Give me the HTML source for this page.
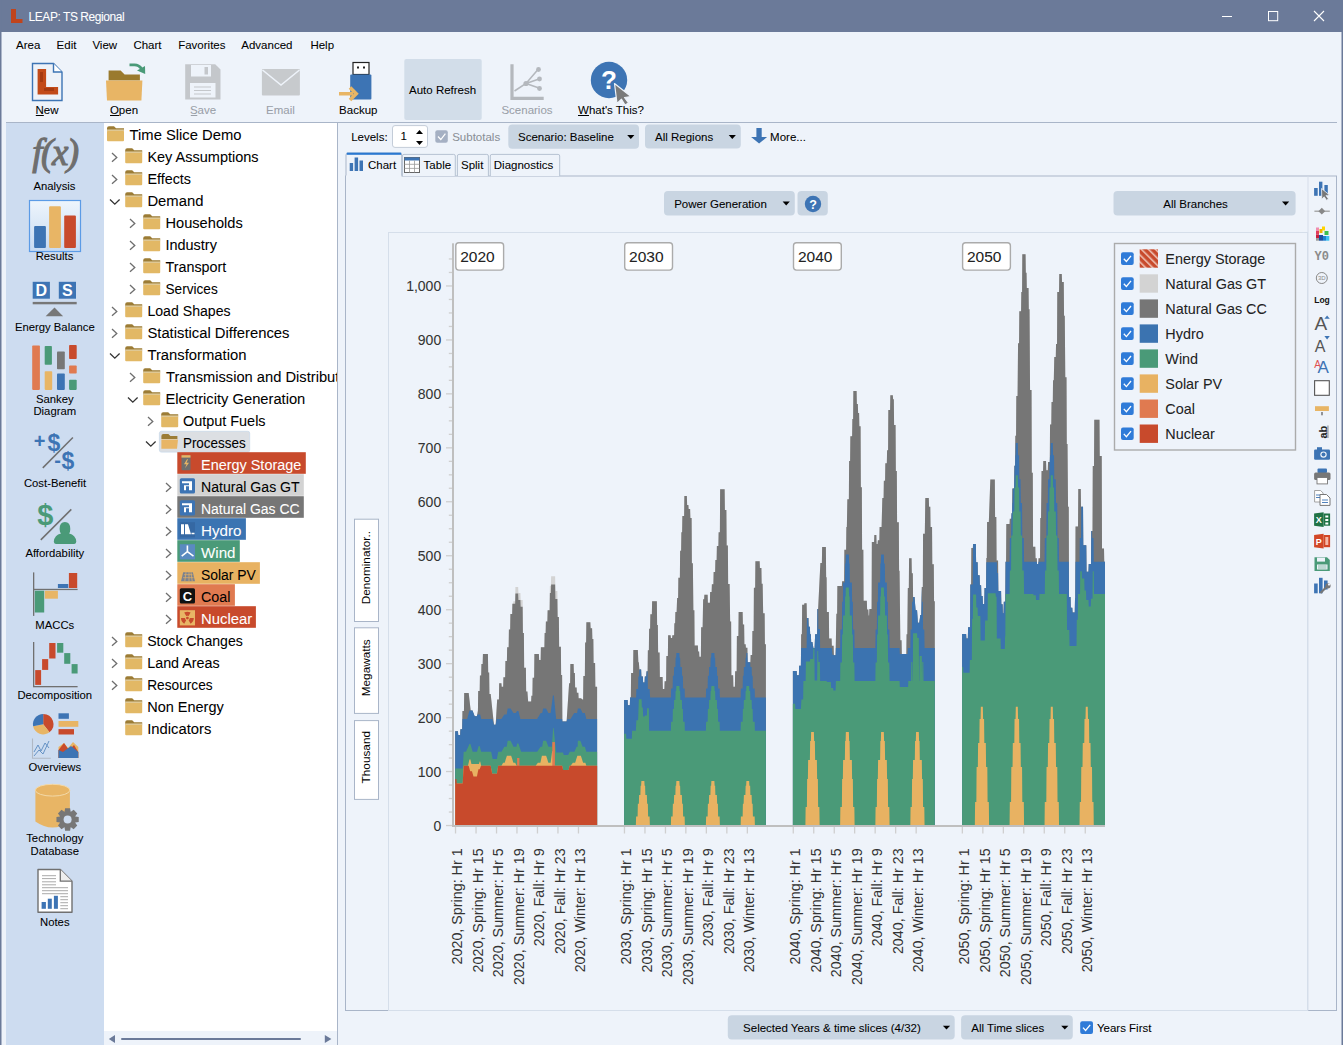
<!DOCTYPE html>
<html><head><meta charset="utf-8"><style>
html,body{margin:0;padding:0;width:1343px;height:1045px;overflow:hidden;background:#eef3fa}
svg{display:block;font-family:"Liberation Sans", sans-serif}
</style></head><body>
<svg width="1343" height="1045" viewBox="0 0 1343 1045">
<rect x="0" y="0" width="1343" height="1045" fill="#eef3fa"/>
<rect x="0" y="0" width="1343" height="32" fill="#6b7a99"/>
<rect x="0" y="0" width="1.5" height="1045" fill="#6b7a99"/>
<rect x="1341.5" y="0" width="1.5" height="1045" fill="#6b7a99"/>
<path d="M11 9 h5 v10 h6.5 v4 h-11.5 z" fill="#c0441c"/>
<text x="28.6" y="21.2" font-size="12" fill="#fff" stroke="#fff" stroke-width="0.06" text-anchor="start" letter-spacing="-0.45">LEAP: TS Regional</text>
<rect x="1222" y="16" width="10" height="1" fill="#fff"/>
<rect x="1268.5" y="11.5" width="9.2" height="9.2" fill="none" stroke="#fff" stroke-width="1"/>
<path d="M1314 11 L1324 21 M1324 11 L1314 21" stroke="#fff" stroke-width="1.1"/>
<text x="16.1" y="48.6" font-size="11.5" fill="#000" stroke="#000" stroke-width="0.06" text-anchor="start" >Area</text>
<text x="56.6" y="48.6" font-size="11.5" fill="#000" stroke="#000" stroke-width="0.06" text-anchor="start" >Edit</text>
<text x="92.4" y="48.6" font-size="11.5" fill="#000" stroke="#000" stroke-width="0.06" text-anchor="start" >View</text>
<text x="133.4" y="48.6" font-size="11.5" fill="#000" stroke="#000" stroke-width="0.06" text-anchor="start" >Chart</text>
<text x="178.2" y="48.6" font-size="11.5" fill="#000" stroke="#000" stroke-width="0.06" text-anchor="start" >Favorites</text>
<text x="241.3" y="48.6" font-size="11.5" fill="#000" stroke="#000" stroke-width="0.06" text-anchor="start" >Advanced</text>
<text x="310.4" y="48.6" font-size="11.5" fill="#000" stroke="#000" stroke-width="0.06" text-anchor="start" >Help</text>
<rect x="6" y="122" width="1331" height="1" fill="#a9b5c8"/>
<path d="M32.5 63.5 h21 l8.5 8.5 v28.5 h-29.5 z" fill="#eef2f8" stroke="#3d74b4" stroke-width="1.4"/>
<path d="M53.5 63.5 v8.5 h8.5" fill="#fff" stroke="#3d74b4" stroke-width="1.4"/>
<path d="M37.6 69 h8.5 v18 h12 v7.5 h-20.5 z" fill="#c24a18"/>
<path d="M40 72 h3 v10 h-3z M44 88 h10 v3 h-10z" fill="#8a2a08" opacity="0.5"/>
<text x="47" y="113.5" font-size="11.5" fill="#000" stroke="#000" stroke-width="0.06" text-anchor="middle" >New</text>
<rect x="35.8" y="115" width="8" height="1" fill="#000"/>
<path d="M108.6 70.6 h12 l4 4 h15.3 v6 h-31.3 z" fill="#9a7a2e"/>
<path d="M106 80.6 h36.4 l-1 19.8 h-34.4 z" fill="#e8b565"/>
<path d="M129.5 64.8 h5 q4.5 0 7 4" stroke="#4a9a78" stroke-width="2.8" fill="none"/>
<path d="M137 70.5 l8 -4.5 l0.2 8 z" fill="#4a9a78"/>
<text x="124" y="113.5" font-size="11.5" fill="#000" stroke="#000" stroke-width="0.06" text-anchor="middle" >Open</text>
<rect x="110" y="115" width="9" height="1" fill="#000"/>
<path d="M185.2 64.2 h30 l5.3 5.3 v29.9 h-35.3 z" fill="#c4c7cb"/>
<rect x="191" y="65" width="20" height="11.5" fill="#eef3fa"/>
<rect x="204.5" y="67" width="3.5" height="7.5" fill="#c4c7cb"/>
<rect x="190" y="83" width="25.5" height="14.5" fill="#eef3fa"/>
<path d="M194 87h17M194 90.5h17M194 94h17" stroke="#c4c7cb" stroke-width="1"/>
<text x="203" y="113.5" font-size="11.5" fill="#9aa0a8" stroke="#9aa0a8" stroke-width="0.06" text-anchor="middle" >Save</text>
<rect x="190.8" y="115" width="6.5" height="1" fill="#9aa0a8"/>
<rect x="261.9" y="69.1" width="38" height="26.4" rx="1" fill="#c7cacd"/>
<path d="M262.5 70 L281 85 L299.5 70" stroke="#eef3fa" stroke-width="1.6" fill="none"/>
<text x="280.5" y="113.5" font-size="11.5" fill="#9aa0a8" stroke="#9aa0a8" stroke-width="0.06" text-anchor="middle" >Email</text>
<rect x="353" y="62.5" width="16" height="12" fill="#fff" stroke="#222" stroke-width="1.2"/>
<rect x="357" y="66.5" width="2" height="2" fill="#222"/><rect x="363" y="66.5" width="2" height="2" fill="#222"/>
<rect x="350.2" y="74.4" width="21.2" height="25" rx="1" fill="#3d74b4"/>
<path d="M339 93.7 h14 M350 87.5 l6.2 6.2 l-6.2 6.2" stroke="#e8b565" stroke-width="3.6" fill="none"/>
<text x="358.3" y="113.5" font-size="11.5" fill="#000" stroke="#000" stroke-width="0.06" text-anchor="middle" >Backup</text>
<rect x="404.3" y="58.9" width="77.4" height="61" rx="2" fill="#d2dde9"/>
<text x="442.6" y="93.7" font-size="11.5" fill="#000" stroke="#000" stroke-width="0.06" text-anchor="middle" >Auto Refresh</text>
<path d="M512 64.3 v34 h31.7" stroke="#b4b8bd" stroke-width="3.2" fill="none"/>
<path d="M514.5 91 L526 83.5 L538 69.5 M526 83.5 L539 79 M526 83.5 L539 88" stroke="#b4b8bd" stroke-width="1.6" fill="none"/>
<circle cx="526" cy="83.5" r="2.6" fill="#b4b8bd"/><circle cx="538.5" cy="69.5" r="2.4" fill="#b4b8bd"/><circle cx="539.5" cy="79" r="2.4" fill="#b4b8bd"/><circle cx="539.5" cy="88.5" r="2.4" fill="#b4b8bd"/>
<text x="527" y="113.5" font-size="11.5" fill="#9aa0a8" stroke="#9aa0a8" stroke-width="0.06" text-anchor="middle" >Scenarios</text>
<circle cx="609" cy="80" r="18.2" fill="#3d74b4"/>
<text x="609" y="89" font-size="26" font-weight="bold" fill="#fff" text-anchor="middle">?</text>
<path d="M614.5 83.5 L631 96.5 L624.5 97.5 L628.5 103 L625 105 L621.5 99.2 L617 103.5 z" fill="#7a7a7a" stroke="#eef3fa" stroke-width="1.2" stroke-linejoin="round"/>
<text x="611" y="113.5" font-size="11.5" fill="#000" stroke="#000" stroke-width="0.06" text-anchor="middle" >What&#39;s This?</text>
<rect x="578" y="115" width="11" height="1" fill="#000"/>
<rect x="6" y="123" width="98" height="922" fill="#cddcf0"/>
<text x="55" y="165" font-family="Liberation Serif" font-style="italic" font-size="37" fill="#6e6e6e" stroke="#6e6e6e" stroke-width="1.1" text-anchor="middle" letter-spacing="-1.5">f(x)</text>
<text x="54.5" y="189.5" font-size="11.3" fill="#000" stroke="#000" stroke-width="0.06" text-anchor="middle" >Analysis</text>
<defs><linearGradient id="rg" x1="0" y1="0" x2="0" y2="1"><stop offset="0" stop-color="#eef5fc"/><stop offset="1" stop-color="#c6daf2"/></linearGradient></defs>
<rect x="29.5" y="200.5" width="51" height="51" fill="url(#rg)" stroke="#5b9be6" stroke-width="1.2"/>
<rect x="34.1" y="226.1" width="11.8" height="21.8" rx="1" fill="#3d74b4"/>
<rect x="49.1" y="206.3" width="11.8" height="41.6" rx="1" fill="#e8b565"/>
<rect x="64.2" y="215.4" width="11.7" height="32.5" rx="1" fill="#c84a2c"/>
<text x="54.5" y="260.3" font-size="11.3" fill="#000" stroke="#000" stroke-width="0.06" text-anchor="middle" >Results</text>
<rect x="32.7" y="281.8" width="17.2" height="16.9" fill="#3d74b4"/>
<rect x="58.8" y="281.8" width="17.2" height="16.9" fill="#3d74b4"/>
<text x="41.3" y="296" font-size="16" font-weight="bold" fill="#fff" text-anchor="middle">D</text>
<text x="67.4" y="296" font-size="16" font-weight="bold" fill="#fff" text-anchor="middle">S</text>
<rect x="32.7" y="301.9" width="44" height="2.4" fill="#777"/>
<path d="M54.5 307.6 L63.1 316.2 L45.6 316.2 z" fill="#777"/>
<text x="54.8" y="331.4" font-size="11.3" fill="#000" stroke="#000" stroke-width="0.06" text-anchor="middle" >Energy Balance</text>
<rect x="32.2" y="345.4" width="7.7" height="44.5" rx="0.8" fill="#e07a50"/>
<rect x="44.7" y="346" width="7.2" height="18.7" rx="0.8" fill="#4a9a78"/>
<rect x="44.7" y="371.2" width="7.5" height="18.7" rx="0.8" fill="#e8b565"/>
<rect x="57" y="351.5" width="7.8" height="17.8" rx="0.8" fill="#777"/>
<rect x="57" y="373.6" width="7.8" height="16.3" rx="0.8" fill="#3d74b4"/>
<rect x="69.1" y="344.9" width="7.6" height="14.1" rx="0.8" fill="#c84a2c"/>
<rect x="69.1" y="365.4" width="7.6" height="8.2" rx="0.8" fill="#e07a50"/>
<rect x="69.1" y="379.8" width="7.6" height="10.1" rx="0.8" fill="#4a9a78"/>
<text x="54.8" y="402.8" font-size="11.3" fill="#000" stroke="#000" stroke-width="0.06" text-anchor="middle" >Sankey</text>
<text x="54.8" y="415" font-size="11.3" fill="#000" stroke="#000" stroke-width="0.06" text-anchor="middle" >Diagram</text>
<text x="39.5" y="448" font-size="20" font-weight="bold" fill="#3d74b4" text-anchor="middle">+</text>
<text x="53.8" y="451" font-size="23" font-weight="bold" fill="#3d74b4" text-anchor="middle">$</text>
<text x="57.5" y="467" font-size="20" font-weight="bold" fill="#3d74b4" text-anchor="middle">-</text>
<text x="68" y="468.5" font-size="23" font-weight="bold" fill="#3d74b4" text-anchor="middle">$</text>
<path d="M42.8 467.9 L72.9 437.5" stroke="#707070" stroke-width="1.5"/>
<text x="55" y="486.6" font-size="11.3" fill="#000" stroke="#000" stroke-width="0.06" text-anchor="middle" >Cost-Benefit</text>
<text x="45.3" y="525" font-size="29" font-weight="bold" fill="#4a9a78" text-anchor="middle">$</text>
<path d="M40.8 539.9 L71.3 509.4" stroke="#707070" stroke-width="1.5"/>
<path d="M59.6 529 q0 -7 5.3 -7 q5.4 0 5.4 7 q0 3 -1.2 4.5 q6.5 1.5 7.2 8 q0 2.4 -2 2.4 h-18.5 q-2 0 -2 -2.4 q0.7 -6.5 7.2 -8 q-1.4 -1.5 -1.4 -4.5z" fill="#4a9a78"/>
<text x="54.8" y="556.9" font-size="11.3" fill="#000" stroke="#000" stroke-width="0.06" text-anchor="middle" >Affordability</text>
<rect x="33" y="572.4" width="1.3" height="43.5" fill="#707070"/>
<rect x="33" y="588.8" width="44.6" height="1.3" fill="#707070"/>
<rect x="34.8" y="590.7" width="9.4" height="21.8" fill="#4a9a78"/>
<rect x="44.8" y="590.7" width="13.1" height="8" fill="#e8b565"/>
<rect x="57.9" y="584" width="10.4" height="4" fill="#3d74b4"/>
<rect x="68.9" y="573" width="8.3" height="15" fill="#c84a2c"/>
<text x="54.8" y="628.6" font-size="11.3" fill="#000" stroke="#000" stroke-width="0.06" text-anchor="middle" >MACCs</text>
<rect x="33" y="642" width="1.3" height="45" fill="#707070"/>
<rect x="33" y="686" width="44.6" height="1.3" fill="#707070"/>
<rect x="35.2" y="670.1" width="5.9" height="14.8" fill="#c84a2c"/>
<rect x="42.1" y="659.1" width="6.1" height="10.8" fill="#c84a2c"/>
<rect x="49.2" y="643" width="6.3" height="15.5" fill="#c84a2c"/>
<rect x="57.1" y="643" width="6.2" height="9.7" fill="#4a9a78"/>
<rect x="64.2" y="653.1" width="6.1" height="10.7" fill="#4a9a78"/>
<rect x="71.6" y="664.1" width="6.0" height="9.4" fill="#4a9a78"/>
<text x="54.8" y="698.9" font-size="11.3" fill="#000" stroke="#000" stroke-width="0.06" text-anchor="middle" >Decomposition</text>
<path d="M43.2 724.2 L43.2 713.9 A10.3 10.3 0 0 1 49.5 732.3 z" fill="#c84a2c"/>
<path d="M43.2 724.2 L49.5 732.3 A10.3 10.3 0 0 1 33.1 726.2 z" fill="#e8b565"/>
<path d="M43.2 724.2 L33.1 726.2 A10.3 10.3 0 0 1 43.2 713.9 z" fill="#3d74b4"/>
<rect x="58.5" y="713.3" width="10.4" height="5.5" fill="#3d74b4"/>
<rect x="58.5" y="721" width="19.8" height="5.8" fill="#e8b565"/>
<rect x="58.5" y="729.1" width="15.5" height="5.4" fill="#c84a2c"/>
<path d="M32.5 738.5 V758.3 H50.8" stroke="#b0b8c4" stroke-width="1.1" fill="none"/>
<path d="M34 752 L38 745 L41 751 L45 743 L49 748 M34 756 L39 750 L43 754 L49 741" stroke="#5a8ac0" stroke-width="0.9" fill="none"/>
<path d="M58.5 757.9 V747 L64 743 L68 748 L73 742 L78.3 747 V757.9 z" fill="#e8b565"/>
<path d="M58.5 757.9 V750 L64 743 L69 750 L74 745 L78.3 752 V757.9 z" fill="#c84a2c"/>
<path d="M58.5 757.9 V750 L63 752 L71 746 L78.3 752 V757.9 z" fill="#3d74b4"/>
<text x="54.8" y="770.6" font-size="11.3" fill="#000" stroke="#000" stroke-width="0.06" text-anchor="middle" >Overviews</text>
<path d="M35.4 790 V821.5 Q52.6 833.5 69.9 821.5 V790 z" fill="#e8b565"/>
<ellipse cx="52.6" cy="790.2" rx="17.25" ry="5.9" fill="#e8b565" stroke="#f3d9a8" stroke-width="1"/>
<polygon points="78.73,817.01 78.73,821.99 75.31,822.58 75.23,822.77 77.23,825.61 73.71,829.13 70.87,827.13 70.68,827.21 70.09,830.63 65.11,830.63 64.52,827.21 64.33,827.13 61.49,829.13 57.97,825.61 59.97,822.77 59.89,822.58 56.47,821.99 56.47,817.01 59.89,816.42 59.97,816.23 57.97,813.39 61.49,809.87 64.33,811.87 64.52,811.79 65.11,808.37 70.09,808.37 70.68,811.79 70.87,811.87 73.71,809.87 77.23,813.39 75.23,816.23 75.31,816.42" fill="#777"/>
<circle cx="67.6" cy="819.5" r="4" fill="#cddcf0"/>
<text x="54.8" y="841.7" font-size="11.3" fill="#000" stroke="#000" stroke-width="0.06" text-anchor="middle" >Technology</text>
<text x="54.8" y="854.6" font-size="11.3" fill="#000" stroke="#000" stroke-width="0.06" text-anchor="middle" >Database</text>
<path d="M38 869.5 H60.3 L72 881.2 V912.3 H38 z" fill="#fff" stroke="#707070" stroke-width="1.4" stroke-linejoin="round"/>
<path d="M60.3 869.5 V881.2 H72" fill="#eee" stroke="#707070" stroke-width="1.3"/>
<rect x="42" y="875.2" width="14" height="1" fill="#aaa"/>
<rect x="42" y="878.1" width="14" height="1" fill="#aaa"/>
<rect x="42" y="881.3" width="14" height="1" fill="#aaa"/>
<rect x="42" y="884.3" width="14" height="1" fill="#aaa"/>
<rect x="42" y="887.2" width="26" height="1" fill="#aaa"/>
<rect x="42" y="890.2" width="26" height="1" fill="#aaa"/>
<rect x="42" y="893.2" width="26" height="1" fill="#aaa"/>
<rect x="60.3" y="896.2" width="7.7" height="1" fill="#aaa"/>
<rect x="60.3" y="899.2" width="7.7" height="1" fill="#aaa"/>
<rect x="60.3" y="902.2" width="7.7" height="1" fill="#aaa"/>
<rect x="60.3" y="905.2" width="7.7" height="1" fill="#aaa"/>
<rect x="60.3" y="908.2" width="7.7" height="1" fill="#aaa"/>
<rect x="41.6" y="902" width="4.3" height="6.8" fill="#3d74b4"/><rect x="47.8" y="898.7" width="4" height="10.1" fill="#3d74b4"/><rect x="53.9" y="895.8" width="4" height="13" fill="#3d74b4"/>
<text x="54.8" y="925.5" font-size="11.3" fill="#000" stroke="#000" stroke-width="0.06" text-anchor="middle" >Notes</text>
<rect x="104" y="123" width="233" height="922" fill="#fff"/>
<rect x="337" y="123" width="1" height="922" fill="#a9b5c8"/>
<defs><clipPath id="treeclip"><rect x="104" y="123" width="233" height="907"/></clipPath></defs>
<g clip-path="url(#treeclip)">
<path d="M107 128.2 q0 -2 2 -2 h5 l2 2 h8 v2.5 h-17 z" fill="#9c7c35"/><rect x="107" y="130.4" width="17" height="10.8" rx="1" fill="#e2b865"/><rect x="107" y="129.6" width="17" height="0.9" fill="#f4e6c4"/>
<text x="129.6" y="140" font-size="14.7" fill="#000" stroke="#000" stroke-width="0.06" textLength="111.8" lengthAdjust="spacingAndGlyphs">Time Slice Demo</text>
<path d="M112 153 L116.8 157.4 L112 161.8" stroke="#6e6e6e" stroke-width="1.3" fill="none"/>
<path d="M125.2 150.2 q0 -2 2 -2 h5 l2 2 h8 v2.5 h-17 z" fill="#9c7c35"/><rect x="125.2" y="152.39999999999998" width="17" height="10.8" rx="1" fill="#e2b865"/><rect x="125.2" y="151.6" width="17" height="0.9" fill="#f4e6c4"/>
<text x="147.4" y="162" font-size="14.7" fill="#000" stroke="#000" stroke-width="0.06" textLength="111.2" lengthAdjust="spacingAndGlyphs">Key Assumptions</text>
<path d="M112 175 L116.8 179.4 L112 183.8" stroke="#6e6e6e" stroke-width="1.3" fill="none"/>
<path d="M125.2 172.2 q0 -2 2 -2 h5 l2 2 h8 v2.5 h-17 z" fill="#9c7c35"/><rect x="125.2" y="174.39999999999998" width="17" height="10.8" rx="1" fill="#e2b865"/><rect x="125.2" y="173.6" width="17" height="0.9" fill="#f4e6c4"/>
<text x="147.4" y="184" font-size="14.7" fill="#000" stroke="#000" stroke-width="0.06" textLength="43.6" lengthAdjust="spacingAndGlyphs">Effects</text>
<path d="M110 199.5 L114.8 204.2 L119.6 199.5" stroke="#333" stroke-width="1.3" fill="none"/>
<path d="M125.2 194.2 q0 -2 2 -2 h5 l2 2 h8 v2.5 h-17 z" fill="#9c7c35"/><rect x="125.2" y="196.39999999999998" width="17" height="10.8" rx="1" fill="#e2b865"/><rect x="125.2" y="195.6" width="17" height="0.9" fill="#f4e6c4"/>
<text x="147.4" y="206" font-size="14.7" fill="#000" stroke="#000" stroke-width="0.06" textLength="56.0" lengthAdjust="spacingAndGlyphs">Demand</text>
<path d="M130 219 L134.8 223.4 L130 227.8" stroke="#6e6e6e" stroke-width="1.3" fill="none"/>
<path d="M143.2 216.2 q0 -2 2 -2 h5 l2 2 h8 v2.5 h-17 z" fill="#9c7c35"/><rect x="143.2" y="218.39999999999998" width="17" height="10.8" rx="1" fill="#e2b865"/><rect x="143.2" y="217.6" width="17" height="0.9" fill="#f4e6c4"/>
<text x="165.5" y="228" font-size="14.7" fill="#000" stroke="#000" stroke-width="0.06" textLength="77.2" lengthAdjust="spacingAndGlyphs">Households</text>
<path d="M130 241 L134.8 245.4 L130 249.8" stroke="#6e6e6e" stroke-width="1.3" fill="none"/>
<path d="M143.2 238.2 q0 -2 2 -2 h5 l2 2 h8 v2.5 h-17 z" fill="#9c7c35"/><rect x="143.2" y="240.39999999999998" width="17" height="10.8" rx="1" fill="#e2b865"/><rect x="143.2" y="239.6" width="17" height="0.9" fill="#f4e6c4"/>
<text x="165.5" y="250" font-size="14.7" fill="#000" stroke="#000" stroke-width="0.06" textLength="51.4" lengthAdjust="spacingAndGlyphs">Industry</text>
<path d="M130 263 L134.8 267.4 L130 271.8" stroke="#6e6e6e" stroke-width="1.3" fill="none"/>
<path d="M143.2 260.2 q0 -2 2 -2 h5 l2 2 h8 v2.5 h-17 z" fill="#9c7c35"/><rect x="143.2" y="262.4" width="17" height="10.8" rx="1" fill="#e2b865"/><rect x="143.2" y="261.59999999999997" width="17" height="0.9" fill="#f4e6c4"/>
<text x="165.5" y="272" font-size="14.7" fill="#000" stroke="#000" stroke-width="0.06" textLength="60.8" lengthAdjust="spacingAndGlyphs">Transport</text>
<path d="M130 285 L134.8 289.4 L130 293.8" stroke="#6e6e6e" stroke-width="1.3" fill="none"/>
<path d="M143.2 282.2 q0 -2 2 -2 h5 l2 2 h8 v2.5 h-17 z" fill="#9c7c35"/><rect x="143.2" y="284.4" width="17" height="10.8" rx="1" fill="#e2b865"/><rect x="143.2" y="283.59999999999997" width="17" height="0.9" fill="#f4e6c4"/>
<text x="165.5" y="294" font-size="14.7" fill="#000" stroke="#000" stroke-width="0.06" textLength="52.2" lengthAdjust="spacingAndGlyphs">Services</text>
<path d="M112 307 L116.8 311.4 L112 315.8" stroke="#6e6e6e" stroke-width="1.3" fill="none"/>
<path d="M125.2 304.2 q0 -2 2 -2 h5 l2 2 h8 v2.5 h-17 z" fill="#9c7c35"/><rect x="125.2" y="306.4" width="17" height="10.8" rx="1" fill="#e2b865"/><rect x="125.2" y="305.59999999999997" width="17" height="0.9" fill="#f4e6c4"/>
<text x="147.4" y="316" font-size="14.7" fill="#000" stroke="#000" stroke-width="0.06" textLength="83.2" lengthAdjust="spacingAndGlyphs">Load Shapes</text>
<path d="M112 329 L116.8 333.4 L112 337.8" stroke="#6e6e6e" stroke-width="1.3" fill="none"/>
<path d="M125.2 326.2 q0 -2 2 -2 h5 l2 2 h8 v2.5 h-17 z" fill="#9c7c35"/><rect x="125.2" y="328.4" width="17" height="10.8" rx="1" fill="#e2b865"/><rect x="125.2" y="327.59999999999997" width="17" height="0.9" fill="#f4e6c4"/>
<text x="147.4" y="338" font-size="14.7" fill="#000" stroke="#000" stroke-width="0.06" textLength="142.1" lengthAdjust="spacingAndGlyphs">Statistical Differences</text>
<path d="M110 353.5 L114.8 358.2 L119.6 353.5" stroke="#333" stroke-width="1.3" fill="none"/>
<path d="M125.2 348.2 q0 -2 2 -2 h5 l2 2 h8 v2.5 h-17 z" fill="#9c7c35"/><rect x="125.2" y="350.4" width="17" height="10.8" rx="1" fill="#e2b865"/><rect x="125.2" y="349.59999999999997" width="17" height="0.9" fill="#f4e6c4"/>
<text x="147.4" y="360" font-size="14.7" fill="#000" stroke="#000" stroke-width="0.06" textLength="99.0" lengthAdjust="spacingAndGlyphs">Transformation</text>
<path d="M130 373 L134.8 377.4 L130 381.8" stroke="#6e6e6e" stroke-width="1.3" fill="none"/>
<path d="M143.2 370.2 q0 -2 2 -2 h5 l2 2 h8 v2.5 h-17 z" fill="#9c7c35"/><rect x="143.2" y="372.4" width="17" height="10.8" rx="1" fill="#e2b865"/><rect x="143.2" y="371.59999999999997" width="17" height="0.9" fill="#f4e6c4"/>
<text x="166" y="382" font-size="14.7" fill="#000" stroke="#000" stroke-width="0.06" text-anchor="start" >Transmission and Distribution</text>
<path d="M128 397.5 L132.8 402.2 L137.6 397.5" stroke="#333" stroke-width="1.3" fill="none"/>
<path d="M143.2 392.2 q0 -2 2 -2 h5 l2 2 h8 v2.5 h-17 z" fill="#9c7c35"/><rect x="143.2" y="394.4" width="17" height="10.8" rx="1" fill="#e2b865"/><rect x="143.2" y="393.59999999999997" width="17" height="0.9" fill="#f4e6c4"/>
<text x="165.5" y="404" font-size="14.7" fill="#000" stroke="#000" stroke-width="0.06" textLength="139.8" lengthAdjust="spacingAndGlyphs">Electricity Generation</text>
<path d="M148 417 L152.8 421.4 L148 425.8" stroke="#6e6e6e" stroke-width="1.3" fill="none"/>
<path d="M161.2 414.2 q0 -2 2 -2 h5 l2 2 h8 v2.5 h-17 z" fill="#9c7c35"/><rect x="161.2" y="416.4" width="17" height="10.8" rx="1" fill="#e2b865"/><rect x="161.2" y="415.59999999999997" width="17" height="0.9" fill="#f4e6c4"/>
<text x="182.9" y="426" font-size="14.7" fill="#000" stroke="#000" stroke-width="0.06" textLength="82.7" lengthAdjust="spacingAndGlyphs">Output Fuels</text>
<rect x="159.4" y="431.3" width="90.3" height="20.8" rx="2" fill="#dcdfe3" stroke="#c9d9ea" stroke-width="0.8"/>
<path d="M146 441.5 L150.8 446.2 L155.6 441.5" stroke="#333" stroke-width="1.3" fill="none"/>
<path d="M161.4 436 q0 -2 2 -2 h5 l2 2 h7 v3 h-16 z" fill="#9c7c35"/><path d="M161.4 439.5 h16.6 l-1 9.3 h-15.6 z" fill="#e8b565"/>
<text x="182.9" y="448" font-size="14.7" fill="#000" stroke="#000" stroke-width="0.06" textLength="62.9" lengthAdjust="spacingAndGlyphs">Processes</text>
<rect x="177.3" y="452.2" width="128.5" height="21.6" fill="#c84a2c"/>
<text x="201" y="470" font-size="14.7" fill="#fff" stroke="#fff" stroke-width="0.06" textLength="100.3" lengthAdjust="spacingAndGlyphs">Energy Storage</text>
<path d="M166 483 L170.8 487.4 L166 491.8" stroke="#6e6e6e" stroke-width="1.3" fill="none"/>
<rect x="177.3" y="474.2" width="126.5" height="21.6" fill="#d3d3d3"/>
<text x="201" y="492" font-size="14.7" fill="#000" stroke="#000" stroke-width="0.06" textLength="98.7" lengthAdjust="spacingAndGlyphs">Natural Gas GT</text>
<path d="M166 505 L170.8 509.4 L166 513.8" stroke="#6e6e6e" stroke-width="1.3" fill="none"/>
<rect x="177.3" y="496.2" width="126.5" height="21.6" fill="#767676"/>
<text x="201" y="514" font-size="14.7" fill="#fff" stroke="#fff" stroke-width="0.06" textLength="98.7" lengthAdjust="spacingAndGlyphs">Natural Gas CC</text>
<path d="M166 527 L170.8 531.4 L166 535.8" stroke="#6e6e6e" stroke-width="1.3" fill="none"/>
<rect x="177.3" y="518.2" width="68.6" height="21.6" fill="#3b74b2"/>
<text x="201" y="536" font-size="14.7" fill="#fff" stroke="#fff" stroke-width="0.06" textLength="40.5" lengthAdjust="spacingAndGlyphs">Hydro</text>
<path d="M166 549 L170.8 553.4 L166 557.8" stroke="#6e6e6e" stroke-width="1.3" fill="none"/>
<rect x="177.3" y="540.2" width="62.5" height="21.6" fill="#4a9a78"/>
<text x="201" y="558" font-size="14.7" fill="#fff" stroke="#fff" stroke-width="0.06" textLength="34.5" lengthAdjust="spacingAndGlyphs">Wind</text>
<path d="M166 571 L170.8 575.4 L166 579.8" stroke="#6e6e6e" stroke-width="1.3" fill="none"/>
<rect x="177.3" y="562.2" width="82.6" height="21.6" fill="#e8b262"/>
<text x="201" y="580" font-size="14.7" fill="#000" stroke="#000" stroke-width="0.06" textLength="54.9" lengthAdjust="spacingAndGlyphs">Solar PV</text>
<path d="M166 593 L170.8 597.4 L166 601.8" stroke="#6e6e6e" stroke-width="1.3" fill="none"/>
<rect x="177.3" y="584.2" width="57.6" height="21.6" fill="#e07a50"/>
<text x="201" y="602" font-size="14.7" fill="#000" stroke="#000" stroke-width="0.06" textLength="29.4" lengthAdjust="spacingAndGlyphs">Coal</text>
<path d="M166 615 L170.8 619.4 L166 623.8" stroke="#6e6e6e" stroke-width="1.3" fill="none"/>
<rect x="177.3" y="606.2" width="78.6" height="21.6" fill="#c84a2c"/>
<text x="201" y="624" font-size="14.7" fill="#fff" stroke="#fff" stroke-width="0.06" textLength="51.2" lengthAdjust="spacingAndGlyphs">Nuclear</text>
<path d="M112 637 L116.8 641.4 L112 645.8" stroke="#6e6e6e" stroke-width="1.3" fill="none"/>
<path d="M125.2 634.2 q0 -2 2 -2 h5 l2 2 h8 v2.5 h-17 z" fill="#9c7c35"/><rect x="125.2" y="636.4000000000001" width="17" height="10.8" rx="1" fill="#e2b865"/><rect x="125.2" y="635.6" width="17" height="0.9" fill="#f4e6c4"/>
<text x="147.2" y="646" font-size="14.7" fill="#000" stroke="#000" stroke-width="0.06" textLength="95.6" lengthAdjust="spacingAndGlyphs">Stock Changes</text>
<path d="M112 659 L116.8 663.4 L112 667.8" stroke="#6e6e6e" stroke-width="1.3" fill="none"/>
<path d="M125.2 656.2 q0 -2 2 -2 h5 l2 2 h8 v2.5 h-17 z" fill="#9c7c35"/><rect x="125.2" y="658.4000000000001" width="17" height="10.8" rx="1" fill="#e2b865"/><rect x="125.2" y="657.6" width="17" height="0.9" fill="#f4e6c4"/>
<text x="147.2" y="668" font-size="14.7" fill="#000" stroke="#000" stroke-width="0.06" textLength="72.5" lengthAdjust="spacingAndGlyphs">Land Areas</text>
<path d="M112 681 L116.8 685.4 L112 689.8" stroke="#6e6e6e" stroke-width="1.3" fill="none"/>
<path d="M125.2 678.2 q0 -2 2 -2 h5 l2 2 h8 v2.5 h-17 z" fill="#9c7c35"/><rect x="125.2" y="680.4000000000001" width="17" height="10.8" rx="1" fill="#e2b865"/><rect x="125.2" y="679.6" width="17" height="0.9" fill="#f4e6c4"/>
<text x="147.2" y="690" font-size="14.7" fill="#000" stroke="#000" stroke-width="0.06" textLength="65.5" lengthAdjust="spacingAndGlyphs">Resources</text>
<path d="M125.2 700.2 q0 -2 2 -2 h5 l2 2 h8 v2.5 h-17 z" fill="#9c7c35"/><rect x="125.2" y="702.4000000000001" width="17" height="10.8" rx="1" fill="#e2b865"/><rect x="125.2" y="701.6" width="17" height="0.9" fill="#f4e6c4"/>
<text x="147.2" y="712" font-size="14.7" fill="#000" stroke="#000" stroke-width="0.06" textLength="76.5" lengthAdjust="spacingAndGlyphs">Non Energy</text>
<path d="M125.2 722.2 q0 -2 2 -2 h5 l2 2 h8 v2.5 h-17 z" fill="#9c7c35"/><rect x="125.2" y="724.4000000000001" width="17" height="10.8" rx="1" fill="#e2b865"/><rect x="125.2" y="723.6" width="17" height="0.9" fill="#f4e6c4"/>
<text x="147.2" y="734" font-size="14.7" fill="#000" stroke="#000" stroke-width="0.06" textLength="64.2" lengthAdjust="spacingAndGlyphs">Indicators</text>
</g>
<rect x="181.5" y="455.2" width="9" height="15" rx="1" fill="#6e6e6e"/><rect x="181.5" y="455.2" width="9" height="2.4" fill="#e8b565"/><path d="M187 459.2 l-3 5 h2.5 l-1.5 4 l4 -5.5 h-2.5 l1.5 -3.5z" fill="#e8b565"/>
<rect x="179.8" y="478.2" width="15.2" height="15.2" rx="1.5" fill="#3d74b4"/><path d="M182 481.2 h10 v9 h-3 v-4 h-3 v4 h-2 v-5 h5 v-2 h-7 z" fill="#fff"/>
<rect x="179.8" y="500.2" width="15.2" height="15.2" rx="1.5" fill="#3d74b4"/><path d="M182 503.2 h10 v9 h-3 v-4 h-3 v4 h-2 v-5 h5 v-2 h-7 z" fill="#fff"/>
<rect x="179.8" y="522.2" width="15.2" height="15.2" fill="#3568a3"/><path d="M181 524.2 h3 v10 h-3z M185 524.2 h3 l3 10 h-6z M191.5 532.7 h3 v1.5 h-3z" fill="#fff"/>
<rect x="179.8" y="544.2" width="15.2" height="15.2" fill="#5a8ac0"/><path d="M187.4 551.7 L187.4 545.4000000000001 M187.4 551.7 L181.7 556.2 M187.4 551.7 L193.5 556.2" stroke="#fff" stroke-width="1.6"/>
<path d="M181 581.2 l2.2 -9 h9.6 l2.2 9 z" fill="#7a8290"/><path d="M184 574.7 h8.5 M183 577.7 h10.6 M186 572.2 l-1.2 9 M189 572.2 v9 M191 572.2 l1.2 9" stroke="#e8b262" stroke-width="0.7"/>
<rect x="179.8" y="588.2" width="15.2" height="15.2" rx="1.5" fill="#111"/><text x="187.4" y="600.8000000000001" font-size="13" font-weight="bold" fill="#fff" text-anchor="middle">C</text>
<rect x="179.8" y="610.2" width="15.2" height="15.2" fill="#e8b565"/>
<circle cx="187.4" cy="618.1" r="1.4" fill="#c84a2c"/>
<path d="M186.20 616.02 L184.20 612.56 A6.4 6.4 0 0 1 190.60 612.56 L188.60 616.02 A2.4 2.4 0 0 0 186.20 616.02z" fill="#c84a2c"/>
<path d="M189.80 618.10 L193.80 618.10 A6.4 6.4 0 0 1 190.60 623.64 L188.60 620.18 A2.4 2.4 0 0 0 189.80 618.10z" fill="#c84a2c"/>
<path d="M186.20 620.18 L184.20 623.64 A6.4 6.4 0 0 1 181.00 618.10 L185.00 618.10 A2.4 2.4 0 0 0 186.20 620.18z" fill="#c84a2c"/>
<rect x="104" y="1031" width="233" height="14" fill="#eef3fa"/>
<path d="M115 1035 L108.8 1039 L115 1043 z" fill="#6b7a99"/>
<path d="M324.8 1035 L331.4 1039 L324.8 1043 z" fill="#6b7a99"/>
<rect x="121" y="1038" width="180" height="2" rx="1" fill="#6b7a99"/>
<text x="351.2" y="141" font-size="11.5" fill="#000" stroke="#000" stroke-width="0.06" text-anchor="start" >Levels:</text>
<rect x="392.5" y="125.6" width="35" height="21.8" rx="2.5" fill="#fff" stroke="#c3ccd8" stroke-width="1"/>
<text x="400.6" y="140" font-size="11.5" fill="#000" stroke="#000" stroke-width="0.06" text-anchor="start" >1</text>
<path d="M416 134 L419.5 129.9 L423 134 z M416 140.9 L419.5 145 L423 140.9 z" fill="#000"/>
<rect x="435.3" y="130.2" width="12.5" height="12.5" rx="2" fill="#a5b0c3"/>
<path d="M438 136.5 l2.8 3 l4.6 -5.8" stroke="#fff" stroke-width="1.2" fill="none"/>
<text x="452.2" y="141" font-size="11.5" fill="#8a8f96" stroke="#8a8f96" stroke-width="0.06" text-anchor="start" >Subtotals</text>
<rect x="508.3" y="124.5" width="130.7" height="24.2" rx="4" fill="#c9d5e2"/>
<text x="518" y="141.1" font-size="11.5" fill="#000" stroke="#000" stroke-width="0.06" text-anchor="start" >Scenario: Baseline</text>
<path d="M627.2 135.1 h7.2 l-3.6 3.8 z" fill="#000"/>
<rect x="645" y="124.5" width="95.8" height="24.1" rx="4" fill="#c9d5e2"/>
<text x="655" y="141.1" font-size="11.5" fill="#000" stroke="#000" stroke-width="0.06" text-anchor="start" >All Regions</text>
<path d="M728.7 135.1 h7.2 l-3.6 3.8 z" fill="#000"/>
<path d="M756.4 128 h5.3 v9 h5.4 l-8 6.6 l-8 -6.6 h5.3 z" fill="#3d74b4"/>
<text x="770.1" y="141" font-size="11.5" fill="#000" stroke="#000" stroke-width="0.06" text-anchor="start" >More...</text>
<rect x="345.5" y="176" width="991" height="834.5" fill="#eef3fa" stroke="#a9b5c8" stroke-width="1"/>
<path d="M346 176.5 V155 q0 -1.8 1.8 -1.8 H400 q1.8 0 1.8 1.8 V176.5" fill="#eef3fa" stroke="#a9b5c8" stroke-width="1"/>
<rect x="346.8" y="152.6" width="54.4" height="2.2" fill="#2a78d0"/>
<rect x="346" y="175.5" width="55.5" height="1.5" fill="#eef3fa"/>
<path d="M402.4 176 V156 q0 -1.6 1.6 -1.6 H453.7 q1.6 0 1.6 1.6 V176" fill="#eef3fa" stroke="#b6c2d2" stroke-width="1"/>
<text x="423.6" y="168.5" font-size="11.5" fill="#000" stroke="#000" stroke-width="0.06" text-anchor="start" >Table</text>
<path d="M457.4 176 V156 q0 -1.6 1.6 -1.6 H486.79999999999995 q1.6 0 1.6 1.6 V176" fill="#eef3fa" stroke="#b6c2d2" stroke-width="1"/>
<text x="461" y="168.5" font-size="11.5" fill="#000" stroke="#000" stroke-width="0.06" text-anchor="start" >Split</text>
<path d="M490.3 176 V156 q0 -1.6 1.6 -1.6 H558.1 q1.6 0 1.6 1.6 V176" fill="#eef3fa" stroke="#b6c2d2" stroke-width="1"/>
<text x="493.8" y="168.5" font-size="11.5" fill="#000" stroke="#000" stroke-width="0.06" text-anchor="start" >Diagnostics</text>
<rect x="349.7" y="163" width="3.4" height="8" fill="#3d74b4"/><rect x="354.6" y="157.5" width="3.5" height="13.5" fill="#3d74b4"/><rect x="359.5" y="160.5" width="3.5" height="10.5" fill="#3d74b4"/>
<text x="368" y="168.5" font-size="11.5" fill="#000" stroke="#000" stroke-width="0.06" text-anchor="start" >Chart</text>
<rect x="404.5" y="157.5" width="15" height="15" fill="#fff" stroke="#666" stroke-width="1"/><rect x="404.5" y="157.5" width="15" height="3" fill="#3d74b4"/>
<path d="M404.5 164.3h15 M404.5 168.4h15 M409.5 160.5v12 M414.5 160.5v12" stroke="#999" stroke-width="0.8"/>
<rect x="664" y="191.1" width="130.8" height="24.5" rx="4" fill="#c9d5e2"/>
<text x="674.2" y="207.6" font-size="11.5" fill="#000" stroke="#000" stroke-width="0.06" text-anchor="start" >Power Generation</text>
<path d="M782.6 201.6 h7.2 l-3.6 3.8 z" fill="#000"/>
<rect x="797.5" y="191.1" width="30.3" height="24.5" rx="4" fill="#c9d5e2"/>
<circle cx="813" cy="204" r="8.2" fill="#3d74b4"/><text x="813" y="208.6" font-size="12.5" font-weight="bold" fill="#fff" text-anchor="middle">?</text>
<rect x="1113.5" y="190.9" width="182.1" height="24.7" rx="4" fill="#c9d5e2"/>
<text x="1163.3" y="207.6" font-size="11.5" fill="#000" stroke="#000" stroke-width="0.06" text-anchor="start" >All Branches</text>
<path d="M1282 201.6 h7.2 l-3.6 3.8 z" fill="#000"/>
<rect x="388.5" y="232.5" width="919" height="778" fill="none" stroke="#d5deea" stroke-width="1"/>
<rect x="1307.5" y="176.5" width="1" height="834" fill="#d5deea"/>
<rect x="354.5" y="519.2" width="24" height="102.3" fill="#fff" stroke="#a9b5c8" stroke-width="1"/>
<text x="0" y="0" font-size="11.8" fill="#000" text-anchor="middle" transform="translate(369.5 567.6) rotate(-90)">Denominator..</text>
<rect x="354.5" y="627.8" width="24" height="85.6" fill="#fff" stroke="#a9b5c8" stroke-width="1"/>
<text x="0" y="0" font-size="11.8" fill="#000" text-anchor="middle" transform="translate(369.5 667.8) rotate(-90)">Megawatts</text>
<rect x="354.5" y="720.6" width="24" height="78.8" fill="#fff" stroke="#a9b5c8" stroke-width="1"/>
<text x="0" y="0" font-size="11.8" fill="#000" text-anchor="middle" transform="translate(369.5 757.2) rotate(-90)">Thousand</text>
<polygon points="455.20,825.5 455.20,731.2 457.95,731.2 458.20,735.0 460.20,735.0 460.45,729.2 462.20,729.2 462.44,711.1 463.94,711.1 464.19,693.1 468.69,693.1 468.94,695.3 469.19,697.5 469.44,699.7 469.69,701.8 469.94,704.0 470.19,706.2 470.44,708.3 470.69,710.5 472.44,710.5 472.69,711.1 472.94,711.8 473.19,712.4 473.44,713.1 473.69,713.7 473.94,714.4 474.19,715.0 474.44,715.7 474.69,716.3 476.93,716.3 477.18,714.9 477.43,713.4 477.68,711.9 477.93,710.5 478.18,691.0 479.68,691.0 479.93,675.4 481.18,675.4 481.43,664.1 482.68,664.1 482.93,653.9 487.93,653.9 488.18,672.5 489.18,672.5 489.43,694.0 490.68,694.0 490.92,696.3 491.17,698.7 491.42,701.1 491.67,703.4 491.92,705.8 492.17,708.2 492.42,710.5 492.67,712.9 492.92,715.2 493.17,717.6 493.42,720.0 493.67,722.3 493.92,724.7 495.67,724.7 495.92,720.5 496.17,716.3 496.42,712.0 496.67,707.8 496.92,703.6 497.17,699.4 498.92,699.4 499.17,683.2 501.42,683.2 501.67,686.8 503.17,686.8 503.42,677.2 505.16,677.2 505.41,661.1 506.91,661.1 507.16,647.3 508.66,647.3 508.91,629.4 510.16,629.4 510.41,613.9 512.16,613.9 512.41,603.7 513.16,603.7 513.41,601.3 515.16,601.3 515.41,587.0 518.16,587.0 518.41,592.9 520.40,592.9 520.65,600.1 522.65,600.1 522.90,633.0 523.90,633.0 524.15,667.7 525.90,667.7 526.15,691.6 527.40,691.6 527.65,694.9 527.90,698.2 528.15,701.5 531.15,701.5 531.40,695.8 532.40,695.8 532.65,677.8 534.14,677.8 534.39,653.9 538.89,653.9 539.14,659.9 540.64,659.9 540.89,647.3 544.39,647.3 544.64,633.0 545.64,633.0 545.89,621.6 547.39,621.6 547.63,610.3 549.63,610.3 549.88,585.8 550.88,585.8 551.13,576.2 555.13,576.2 555.38,591.1 557.38,591.1 557.63,616.9 558.88,616.9 559.13,646.7 560.88,646.7 561.13,674.9 562.12,674.9 562.37,721.5 566.62,721.5 566.87,717.6 567.12,713.8 567.37,710.0 567.62,706.2 567.87,702.3 568.12,698.5 568.37,694.7 568.62,690.9 568.87,687.0 569.12,683.2 570.12,683.2 570.37,664.1 573.62,664.1 573.87,673.1 574.87,673.1 575.12,687.4 576.61,687.4 576.86,692.8 578.36,692.8 578.61,698.2 580.86,698.2 581.11,698.4 581.36,698.6 581.61,698.8 581.86,699.0 582.11,699.2 582.36,699.4 583.11,699.4 583.36,676.0 584.86,676.0 585.11,642.6 586.11,642.6 586.36,622.2 590.35,622.2 590.60,628.2 592.10,628.2 592.35,639.0 593.35,639.0 593.60,662.9 595.10,662.9 595.35,686.8 597.10,686.8 597.10,825.5" fill="#d3d3d3"/>
<polygon points="455.20,825.5 455.20,731.2 457.95,731.2 458.20,735.0 460.20,735.0 460.45,729.2 462.20,729.2 462.44,711.1 463.94,711.1 464.19,693.1 468.69,693.1 468.94,695.3 469.19,697.5 469.44,699.7 469.69,701.8 469.94,704.0 470.19,706.2 470.44,708.3 470.69,710.5 472.44,710.5 472.69,711.1 472.94,711.8 473.19,712.4 473.44,713.1 473.69,713.7 473.94,714.4 474.19,715.0 474.44,715.7 474.69,716.3 476.93,716.3 477.18,714.9 477.43,713.4 477.68,711.9 477.93,710.5 478.18,691.0 479.68,691.0 479.93,675.4 481.18,675.4 481.43,664.1 482.68,664.1 482.93,653.9 487.93,653.9 488.18,672.5 489.18,672.5 489.43,694.0 490.68,694.0 490.92,696.3 491.17,698.7 491.42,701.1 491.67,703.4 491.92,705.8 492.17,708.2 492.42,710.5 492.67,712.9 492.92,715.2 493.17,717.6 493.42,720.0 493.67,722.3 493.92,724.7 495.67,724.7 495.92,720.5 496.17,716.3 496.42,712.0 496.67,707.8 496.92,703.6 497.17,699.4 498.92,699.4 499.17,683.2 501.42,683.2 501.67,686.8 503.17,686.8 503.42,677.2 505.16,677.2 505.41,661.1 506.91,661.1 507.16,647.3 508.66,647.3 508.91,629.4 510.16,629.4 510.41,613.9 512.16,613.9 512.41,603.7 515.16,603.7 515.41,593.5 518.16,593.5 518.41,600.1 520.40,600.1 520.65,606.7 522.65,606.7 522.90,633.0 523.90,633.0 524.15,667.7 525.90,667.7 526.15,691.6 527.40,691.6 527.65,694.9 527.90,698.2 528.15,701.5 531.15,701.5 531.40,695.8 532.40,695.8 532.65,677.8 534.14,677.8 534.39,653.9 538.89,653.9 539.14,659.9 540.64,659.9 540.89,647.3 544.39,647.3 544.64,633.0 545.64,633.0 545.89,621.6 547.39,621.6 547.63,610.3 549.63,610.3 549.88,592.9 550.88,592.9 551.13,584.6 555.13,584.6 555.38,598.9 557.38,598.9 557.63,616.9 558.88,616.9 559.13,646.7 560.88,646.7 561.13,674.9 562.12,674.9 562.37,721.5 566.62,721.5 566.87,717.6 567.12,713.8 567.37,710.0 567.62,706.2 567.87,702.3 568.12,698.5 568.37,694.7 568.62,690.9 568.87,687.0 569.12,683.2 570.12,683.2 570.37,664.1 573.62,664.1 573.87,673.1 574.87,673.1 575.12,687.4 576.61,687.4 576.86,692.8 578.36,692.8 578.61,698.2 580.86,698.2 581.11,698.4 581.36,698.6 581.61,698.8 581.86,699.0 582.11,699.2 582.36,699.4 583.11,699.4 583.36,676.0 584.86,676.0 585.11,642.6 586.11,642.6 586.36,622.2 590.35,622.2 590.60,628.2 592.10,628.2 592.35,639.0 593.35,639.0 593.60,662.9 595.10,662.9 595.35,686.8 597.10,686.8 597.10,825.5" fill="#767676"/>
<polygon points="455.20,825.5 455.20,731.2 457.95,731.2 458.20,735.0 460.20,735.0 460.45,729.2 462.20,729.2 462.44,718.9 467.19,718.9 467.44,718.0 467.69,717.0 467.94,716.1 468.19,715.2 468.44,714.2 468.69,713.3 468.94,712.4 469.19,711.4 469.44,710.5 472.44,710.5 472.69,711.1 472.94,711.8 473.19,712.4 473.44,713.1 473.69,713.7 473.94,714.4 474.19,715.0 474.44,715.7 474.69,716.3 476.93,716.3 477.18,715.0 477.43,714.8 477.68,714.6 477.93,714.4 480.18,714.4 480.43,715.5 480.68,716.6 480.93,717.8 481.18,718.9 492.42,718.9 492.67,719.9 492.92,720.8 493.17,721.8 493.42,722.8 493.67,723.7 493.92,724.7 495.67,724.7 495.92,723.2 496.17,721.8 496.42,720.3 496.67,718.9 501.42,718.9 501.67,718.5 501.92,718.1 502.17,717.8 502.42,717.4 502.67,717.0 502.92,716.6 503.17,716.3 503.42,715.9 503.67,715.5 503.92,715.1 504.17,714.7 504.42,714.4 506.66,714.4 506.91,712.9 507.16,711.5 507.41,710.0 507.66,708.6 510.66,708.6 510.91,709.0 511.16,709.4 511.41,709.8 511.66,710.2 511.91,710.6 512.16,711.0 512.41,711.4 512.66,711.8 512.91,712.3 513.16,712.7 513.41,713.1 515.66,713.1 515.91,712.8 516.16,712.4 516.41,712.1 516.66,711.8 516.91,711.5 517.16,711.1 518.41,711.1 518.66,712.1 518.91,713.1 519.15,714.0 519.40,715.0 519.65,716.0 519.90,717.0 520.15,717.9 520.40,718.9 537.14,718.9 537.39,718.5 537.64,718.1 537.89,717.6 538.14,717.2 538.39,716.8 538.64,716.4 538.89,716.0 539.14,715.6 539.39,715.2 539.64,714.7 539.89,714.3 540.14,713.9 540.39,713.5 540.64,713.1 542.14,713.1 542.39,711.9 542.64,710.8 542.89,709.7 543.14,708.6 546.14,708.6 546.39,709.1 546.64,709.6 546.89,710.1 547.14,710.6 547.39,711.1 547.63,711.6 547.88,712.1 548.13,712.6 548.38,713.1 550.63,713.1 550.88,711.1 551.13,709.2 551.38,707.3 551.63,705.3 551.88,703.4 552.13,701.5 552.38,699.5 552.63,697.6 552.88,695.6 553.88,695.6 554.13,698.2 554.38,700.8 554.63,703.4 554.88,706.0 555.13,708.6 555.38,711.1 555.63,713.7 555.88,716.3 556.13,718.9 562.12,718.9 562.37,721.5 566.62,721.5 566.87,720.2 567.12,719.8 567.37,719.3 567.62,718.9 570.62,718.9 570.87,718.5 571.12,718.1 571.37,717.6 571.62,717.2 571.87,716.8 572.12,716.4 572.37,716.0 572.62,715.6 572.87,715.2 573.12,714.7 573.37,714.3 573.62,713.9 573.87,713.5 574.12,713.1 577.11,713.1 577.36,711.6 577.61,710.1 577.86,708.6 580.36,708.6 580.61,709.1 580.86,709.6 581.11,710.1 581.36,710.6 581.61,711.1 581.86,711.6 582.11,712.1 582.36,712.6 582.61,713.1 584.86,713.1 585.11,714.0 585.36,715.0 585.61,716.0 585.86,717.0 586.11,717.9 586.36,718.9 597.10,718.9 597.10,825.5" fill="#3b73b0"/>
<polygon points="455.20,825.5 455.20,768.6 462.69,768.6 462.94,764.4 463.19,760.2 463.44,756.0 463.69,751.8 465.94,751.8 466.19,751.3 466.44,750.7 466.69,750.2 466.94,749.6 467.19,749.1 467.44,748.5 467.69,747.9 467.94,747.4 468.19,746.8 468.44,746.3 468.69,745.7 468.94,745.2 469.19,744.6 469.44,744.1 470.44,744.1 470.69,744.9 470.94,745.8 471.19,746.7 471.44,747.5 471.69,748.4 471.94,749.2 472.19,750.1 472.44,751.0 472.69,751.8 476.93,751.8 477.18,751.0 477.43,750.2 477.68,749.3 477.93,748.5 478.18,747.7 478.43,746.8 478.68,746.0 479.68,746.0 479.93,747.0 480.18,747.9 480.43,748.9 480.68,749.9 480.93,750.8 481.18,751.8 491.17,751.8 491.42,753.0 491.67,754.2 491.92,755.4 492.17,756.6 492.42,757.7 492.67,758.9 496.92,758.9 497.17,757.5 497.42,756.1 497.67,754.7 497.92,753.2 498.17,751.8 501.42,751.8 501.67,751.4 501.92,751.0 502.17,750.5 502.42,750.1 502.67,749.7 502.92,749.2 503.17,748.8 503.42,748.4 503.67,747.9 503.92,747.5 504.17,747.1 504.42,746.7 506.66,746.7 506.91,745.2 507.16,743.7 507.41,742.3 507.66,740.8 510.66,740.8 510.91,741.4 511.16,741.9 511.41,742.4 511.66,743.0 511.91,743.5 512.16,744.0 512.41,744.5 512.66,745.1 512.91,745.6 513.16,746.1 513.41,746.7 516.41,746.7 516.66,745.6 516.91,744.5 517.16,743.4 518.41,743.4 518.66,744.2 518.91,745.0 519.15,745.7 519.40,746.5 519.65,747.2 519.90,748.0 520.15,748.8 520.40,749.5 520.65,750.3 520.90,751.1 521.15,751.8 537.14,751.8 537.39,751.4 537.64,751.1 537.89,750.7 538.14,750.3 538.39,750.0 538.64,749.6 538.89,749.2 539.14,748.9 539.39,748.5 539.64,748.1 539.89,747.8 540.14,747.4 540.39,747.0 540.64,746.7 542.14,746.7 542.39,745.2 542.64,743.7 542.89,742.3 543.14,740.8 546.14,740.8 546.39,741.5 546.64,742.1 546.89,742.8 547.14,743.4 547.39,744.1 547.63,744.7 547.88,745.4 548.13,746.0 548.38,746.7 551.88,746.7 552.13,742.9 552.38,739.2 552.63,735.4 552.88,731.7 553.13,727.9 553.63,727.9 553.88,730.4 554.13,732.8 554.38,735.3 554.63,737.7 554.88,740.2 555.13,742.6 555.38,745.1 555.63,747.6 555.88,750.0 556.13,752.5 562.87,752.5 563.12,753.1 563.37,753.8 563.62,754.4 563.87,755.0 568.12,755.0 568.37,754.5 568.62,754.0 568.87,753.4 569.12,752.9 569.37,752.4 569.62,751.8 574.37,751.8 574.62,751.2 574.87,750.7 575.12,750.1 575.37,749.5 575.62,748.9 575.86,748.4 576.11,747.8 576.36,747.2 576.61,746.7 577.61,746.7 577.86,740.8 580.36,740.8 580.61,741.5 580.86,742.1 581.11,742.8 581.36,743.4 581.61,744.1 581.86,744.7 582.11,745.4 582.36,746.0 582.61,746.7 584.86,746.7 585.11,747.5 585.36,748.4 585.61,749.2 585.86,750.1 586.11,751.0 586.36,751.8 597.10,751.8 597.10,825.5" fill="#4a9a78"/>
<polygon points="455.20,825.5 455.20,783.5 462.69,783.5 462.94,779.0 463.19,774.6 463.44,770.2 463.69,765.8 467.94,765.8 468.19,764.7 468.44,763.7 468.69,762.7 468.94,761.6 469.19,760.6 469.44,759.6 470.44,759.6 470.69,760.7 470.94,761.8 471.19,763.0 471.44,764.1 478.93,764.1 479.18,763.2 479.43,762.4 479.68,761.5 480.18,761.5 480.43,762.6 480.68,763.6 480.93,764.7 481.18,765.8 490.68,765.8 490.92,767.1 491.17,768.4 491.42,769.8 491.67,771.1 491.92,772.4 492.17,773.8 496.92,773.8 497.17,772.2 497.42,770.6 497.67,769.0 497.92,767.4 498.17,765.8 501.42,765.8 501.67,765.3 501.92,764.9 502.17,764.5 502.42,764.1 502.67,763.6 502.92,763.2 503.17,762.8 504.67,762.8 504.91,762.0 505.16,761.2 505.41,760.4 505.66,759.6 505.91,758.8 506.16,758.1 506.41,757.3 506.66,756.5 506.91,755.7 511.16,755.7 511.41,756.5 511.66,757.3 511.91,758.1 512.16,758.8 512.41,759.6 512.66,760.4 512.91,761.2 513.16,762.0 513.41,762.8 515.16,762.8 515.41,763.3 515.66,763.8 515.91,764.3 516.16,764.8 516.41,765.3 516.66,765.8 535.64,765.8 535.89,765.4 536.14,765.1 536.39,764.8 536.64,764.4 536.89,764.1 537.14,763.8 537.39,763.5 537.64,763.1 537.89,762.8 540.39,762.8 540.64,761.6 540.89,760.4 541.14,759.2 541.39,758.1 541.64,756.9 541.89,755.7 546.14,755.7 546.39,756.5 546.64,757.3 546.89,758.1 547.14,758.8 547.39,759.6 547.63,760.4 547.88,761.2 548.13,762.0 548.38,762.8 550.63,762.8 550.88,760.9 551.13,758.9 551.38,757.0 551.63,755.0 551.88,753.1 552.13,751.2 553.13,751.2 553.38,754.8 553.63,758.5 553.88,762.1 554.13,765.8 562.12,765.8 562.37,766.8 562.62,767.8 562.87,768.9 563.12,769.9 568.62,769.9 568.87,768.9 569.12,767.8 569.37,766.8 569.62,765.8 570.62,765.8 570.87,765.4 571.12,765.1 571.37,764.8 571.62,764.4 571.87,764.1 572.12,763.8 572.37,763.5 572.62,763.1 572.87,762.8 575.12,762.8 575.37,762.0 575.62,761.2 575.86,760.4 576.11,759.6 576.36,758.8 576.61,758.1 576.86,757.3 577.11,756.5 577.36,755.7 580.86,755.7 581.11,756.5 581.36,757.3 581.61,758.1 581.86,758.8 582.11,759.6 582.36,760.4 582.61,761.2 582.86,762.0 583.11,762.8 585.36,762.8 585.61,763.5 585.86,764.3 586.11,765.0 586.36,765.8 597.10,765.8 597.10,825.5" fill="#e8b262"/>
<rect x="517.1" y="758.0" width="2.3" height="67.5" fill="#e07a50"/>
<rect x="552.3" y="742.1" width="2.6" height="83.4" fill="#e07a50"/>
<polygon points="455.20,825.5 455.20,778.9 456.45,778.9 456.70,783.5 462.69,783.5 462.94,779.0 463.19,774.6 463.44,770.2 463.69,765.8 468.69,765.8 468.94,766.7 469.19,767.6 469.44,768.5 469.69,769.4 469.94,770.3 470.19,771.2 471.94,771.2 472.19,772.0 472.44,772.9 472.69,773.8 472.94,774.6 473.19,775.5 473.44,776.4 476.93,776.4 477.18,775.2 477.43,774.0 477.68,772.8 477.93,771.6 478.18,770.4 478.43,769.3 479.68,769.3 479.93,768.6 480.18,767.9 480.43,767.2 480.68,766.5 480.93,765.8 490.68,765.8 490.92,767.1 491.17,768.4 491.42,769.8 491.67,771.1 491.92,772.4 492.17,773.8 496.92,773.8 497.17,772.2 497.42,770.6 497.67,769.0 497.92,767.4 498.17,765.8 562.12,765.8 562.37,766.8 562.62,767.8 562.87,768.9 563.12,769.9 568.62,769.9 568.87,768.9 569.12,767.8 569.37,766.8 569.62,765.8 597.10,765.8 597.10,825.5" fill="#c84a2c"/>
<polygon points="624.10,825.5 624.10,699.9 627.60,699.9 627.85,705.2 629.85,705.2 630.10,697.5 630.85,697.5 631.10,672.9 633.10,672.9 633.35,650.0 637.85,650.0 638.10,656.1 638.36,662.2 638.86,662.2 639.11,665.8 639.36,669.4 641.11,669.4 641.36,676.5 642.86,676.5 643.11,682.5 644.61,682.5 644.86,676.5 646.11,676.5 646.36,673.8 646.61,671.2 647.61,671.2 647.86,650.2 648.86,650.2 649.11,628.7 650.11,628.7 650.36,614.3 651.86,614.3 652.11,601.2 656.86,601.2 657.11,625.1 657.86,625.1 658.11,652.6 659.61,652.6 659.86,677.1 662.61,677.1 662.86,689.1 664.36,689.1 664.61,681.3 666.11,681.3 666.36,656.0 667.87,656.0 668.12,635.3 670.62,635.3 670.87,638.0 672.12,638.0 672.37,635.3 674.12,635.3 674.37,623.3 675.12,623.3 675.37,612.0 676.62,612.0 676.87,605.0 677.12,598.0 678.12,598.0 678.37,577.7 679.87,577.7 680.12,550.8 681.12,550.8 681.37,532.2 682.12,532.2 682.37,516.1 684.12,516.1 684.37,496.0 686.87,496.0 687.12,505.1 688.37,505.1 688.62,508.9 690.12,508.9 690.37,517.9 691.62,517.9 691.87,563.3 692.87,563.3 693.12,586.7 693.37,610.2 694.37,610.2 694.62,645.4 697.88,645.4 698.13,651.4 699.13,651.4 699.38,656.8 700.88,656.8 701.13,627.3 702.63,627.3 702.88,613.2 703.13,599.2 704.13,599.2 704.38,594.8 707.63,594.8 707.88,602.8 709.88,602.8 710.13,592.0 711.63,592.0 711.88,584.3 713.38,584.3 713.63,572.1 715.13,572.1 715.38,560.1 716.63,560.1 716.88,546.0 718.38,546.0 718.63,532.2 719.88,532.2 720.13,489.2 724.64,489.2 724.89,510.1 726.39,510.1 726.64,545.4 727.89,545.4 728.14,584.0 729.64,584.0 729.89,602.8 730.14,621.5 731.14,621.5 731.39,675.3 733.14,675.3 733.39,686.7 734.89,686.7 735.14,671.2 736.64,671.2 736.89,635.9 738.39,635.9 738.64,612.0 742.64,612.0 742.89,624.5 744.14,624.5 744.39,644.2 745.64,644.2 745.89,647.8 747.39,647.8 747.64,662.2 750.39,662.2 750.64,655.0 752.15,655.0 752.40,631.1 753.65,631.1 753.90,587.8 755.15,587.8 755.40,561.3 759.65,561.3 759.90,568.1 761.40,568.1 761.65,583.7 762.65,583.7 762.90,598.4 763.15,613.2 764.65,613.2 764.90,644.2 765.90,644.2 765.90,825.5" fill="#d3d3d3"/>
<polygon points="624.10,825.5 624.10,699.9 627.60,699.9 627.85,705.2 629.85,705.2 630.10,697.5 630.85,697.5 631.10,672.9 633.10,672.9 633.35,650.0 637.85,650.0 638.10,656.1 638.36,662.2 638.86,662.2 639.11,665.8 639.36,669.4 641.11,669.4 641.36,676.5 642.86,676.5 643.11,682.5 644.61,682.5 644.86,676.5 646.11,676.5 646.36,673.8 646.61,671.2 647.61,671.2 647.86,650.2 648.86,650.2 649.11,628.7 650.11,628.7 650.36,614.3 651.86,614.3 652.11,601.2 656.86,601.2 657.11,625.1 657.86,625.1 658.11,652.6 659.61,652.6 659.86,677.1 662.61,677.1 662.86,689.1 664.36,689.1 664.61,681.3 666.11,681.3 666.36,656.0 667.87,656.0 668.12,635.3 670.62,635.3 670.87,638.0 672.12,638.0 672.37,635.3 674.12,635.3 674.37,623.3 675.12,623.3 675.37,612.0 676.62,612.0 676.87,605.0 677.12,598.0 678.12,598.0 678.37,577.7 679.87,577.7 680.12,550.8 681.12,550.8 681.37,532.2 682.12,532.2 682.37,516.1 684.12,516.1 684.37,496.0 686.87,496.0 687.12,505.1 688.37,505.1 688.62,508.9 690.12,508.9 690.37,517.9 691.62,517.9 691.87,563.3 692.87,563.3 693.12,586.7 693.37,610.2 694.37,610.2 694.62,645.4 697.88,645.4 698.13,651.4 699.13,651.4 699.38,656.8 700.88,656.8 701.13,627.3 702.63,627.3 702.88,613.2 703.13,599.2 704.13,599.2 704.38,594.8 707.63,594.8 707.88,602.8 709.88,602.8 710.13,592.0 711.63,592.0 711.88,584.3 713.38,584.3 713.63,572.1 715.13,572.1 715.38,560.1 716.63,560.1 716.88,546.0 718.38,546.0 718.63,532.2 719.88,532.2 720.13,489.2 724.64,489.2 724.89,510.1 726.39,510.1 726.64,545.4 727.89,545.4 728.14,584.0 729.64,584.0 729.89,602.8 730.14,621.5 731.14,621.5 731.39,675.3 733.14,675.3 733.39,686.7 734.89,686.7 735.14,671.2 736.64,671.2 736.89,635.9 738.39,635.9 738.64,612.0 742.64,612.0 742.89,624.5 744.14,624.5 744.39,644.2 745.64,644.2 745.89,647.8 747.39,647.8 747.64,662.2 750.39,662.2 750.64,655.0 752.15,655.0 752.40,631.1 753.65,631.1 753.90,587.8 755.15,587.8 755.40,561.3 759.65,561.3 759.90,568.1 761.40,568.1 761.65,583.7 762.65,583.7 762.90,598.4 763.15,613.2 764.65,613.2 764.90,644.2 765.90,644.2 765.90,825.5" fill="#767676"/>
<polygon points="624.10,825.5 624.10,699.9 627.60,699.9 627.85,705.2 629.85,705.2 630.10,697.5 636.10,697.5 636.35,689.1 638.10,689.1 638.36,676.5 639.11,676.5 639.36,669.4 641.11,669.4 641.36,676.5 642.86,676.5 643.11,682.5 644.61,682.5 644.86,676.5 646.36,676.5 646.61,671.2 647.61,671.2 647.86,689.1 649.61,689.1 649.86,693.3 650.11,697.5 670.87,697.5 671.12,688.5 672.62,688.5 672.87,675.7 673.87,675.7 674.12,666.9 675.37,666.9 675.62,657.7 676.12,657.7 676.37,652.9 679.37,652.9 679.62,657.7 680.12,657.7 680.37,666.9 681.87,666.9 682.12,675.7 682.87,675.7 683.12,688.5 684.62,688.5 684.87,697.5 705.88,697.5 706.13,688.5 707.63,688.5 707.88,675.7 708.88,675.7 709.13,666.9 710.38,666.9 710.63,657.7 711.13,657.7 711.38,652.9 714.38,652.9 714.63,657.7 715.13,657.7 715.38,666.9 716.88,666.9 717.13,675.7 717.88,675.7 718.13,688.5 719.63,688.5 719.88,697.5 740.64,697.5 740.89,688.5 742.64,688.5 742.89,675.7 743.64,675.7 743.89,666.9 745.39,666.9 745.64,657.7 746.14,657.7 746.39,652.9 747.39,652.9 747.64,662.2 750.14,662.2 750.39,666.9 751.64,666.9 751.90,675.7 752.65,675.7 752.90,688.5 754.65,688.5 754.90,697.5 765.90,697.5 765.90,825.5" fill="#3b73b0"/>
<polygon points="624.10,825.5 624.10,733.7 626.10,733.7 626.35,738.7 631.85,738.7 632.10,730.7 635.85,730.7 636.10,725.4 636.35,720.2 638.10,720.2 638.36,713.2 638.61,706.2 638.86,699.3 641.61,699.3 641.86,707.6 642.86,707.6 643.11,716.6 644.61,716.6 644.86,715.4 646.86,715.4 647.11,708.2 648.86,708.2 649.11,730.7 670.87,730.7 671.12,721.7 672.62,721.7 672.87,708.9 673.87,708.9 674.12,700.1 675.37,700.1 675.62,690.9 676.12,690.9 676.37,686.1 679.37,686.1 679.62,690.9 680.12,690.9 680.37,700.1 681.87,700.1 682.12,708.9 682.87,708.9 683.12,721.7 684.62,721.7 684.87,730.7 705.88,730.7 706.13,721.7 707.63,721.7 707.88,708.9 708.88,708.9 709.13,700.1 710.38,700.1 710.63,690.9 711.13,690.9 711.38,686.1 714.38,686.1 714.63,690.9 715.13,690.9 715.38,700.1 716.88,700.1 717.13,708.9 717.88,708.9 718.13,721.7 719.63,721.7 719.88,730.7 740.64,730.7 740.89,721.7 742.64,721.7 742.89,708.9 743.64,708.9 743.89,700.1 745.39,700.1 745.64,690.9 746.14,690.9 746.39,686.1 749.14,686.1 749.39,690.9 750.14,690.9 750.39,700.1 751.64,700.1 751.90,708.9 752.65,708.9 752.90,721.7 754.65,721.7 754.90,730.7 765.90,730.7 765.90,825.5" fill="#4a9a78"/>
<polygon points="624.10,825.5 624.10,825.5 635.85,825.5 636.10,816.5 637.60,816.5 637.85,803.7 638.86,803.7 639.11,794.9 640.36,794.9 640.61,785.7 641.11,785.7 641.36,780.9 644.36,780.9 644.61,785.7 645.11,785.7 645.36,794.9 646.86,794.9 647.11,803.7 647.86,803.7 648.11,816.5 649.61,816.5 649.86,825.5 670.87,825.5 671.12,816.5 672.62,816.5 672.87,803.7 673.87,803.7 674.12,794.9 675.37,794.9 675.62,785.7 676.12,785.7 676.37,780.9 679.37,780.9 679.62,785.7 680.12,785.7 680.37,794.9 681.87,794.9 682.12,803.7 682.87,803.7 683.12,816.5 684.62,816.5 684.87,825.5 705.88,825.5 706.13,816.5 707.63,816.5 707.88,803.7 708.88,803.7 709.13,794.9 710.38,794.9 710.63,785.7 711.13,785.7 711.38,780.9 714.38,780.9 714.63,785.7 715.13,785.7 715.38,794.9 716.88,794.9 717.13,803.7 717.88,803.7 718.13,816.5 719.63,816.5 719.88,825.5 740.64,825.5 740.89,816.5 742.64,816.5 742.89,803.7 743.64,803.7 743.89,794.9 745.39,794.9 745.64,785.7 746.14,785.7 746.39,780.9 749.14,780.9 749.39,785.7 750.14,785.7 750.39,794.9 751.64,794.9 751.90,803.7 752.65,803.7 752.90,816.5 754.65,816.5 754.90,825.5 765.90,825.5 765.90,825.5" fill="#e8b262"/>
<polygon points="792.90,825.5 792.90,671.1 796.65,671.1 796.90,675.3 798.90,675.3 799.15,665.8 800.89,665.8 801.14,634.2 801.89,634.2 802.14,604.7 804.14,604.7 804.39,603.2 806.64,603.2 806.89,617.9 808.39,617.9 808.64,626.8 809.89,626.8 810.14,634.2 810.89,634.2 811.14,642.1 812.39,642.1 812.64,643.6 812.89,645.0 813.14,646.4 813.39,647.9 814.63,647.9 814.88,641.1 815.13,634.2 817.13,634.2 817.38,608.9 818.13,608.9 818.38,603.8 818.63,598.7 818.88,593.6 819.13,588.5 819.38,583.4 819.63,578.3 819.88,573.2 820.13,568.1 820.38,563.0 821.88,563.0 822.13,547.1 825.88,547.1 826.13,577.3 826.63,577.3 826.88,612.0 828.87,612.0 829.12,638.5 831.62,638.5 831.87,645.7 833.62,645.7 833.87,655.3 835.62,655.3 835.87,641.5 836.12,627.6 836.37,613.8 837.12,613.8 837.37,586.1 841.87,586.1 842.12,581.3 844.11,581.3 844.36,549.8 846.11,549.8 846.36,527.1 846.86,527.1 847.11,513.2 847.36,499.2 848.86,499.2 849.11,460.9 850.11,460.9 850.36,436.2 852.11,436.2 852.36,419.1 853.11,419.1 853.36,391.0 856.61,391.0 856.85,403.9 857.85,403.9 858.10,413.1 859.10,413.1 859.35,426.3 860.60,426.3 860.85,487.2 861.85,487.2 862.10,549.8 863.35,549.8 863.60,600.7 866.85,600.7 867.10,609.6 868.35,609.6 868.60,615.6 869.10,615.6 869.35,609.0 871.59,609.0 871.84,542.1 874.09,542.1 874.34,535.1 876.34,535.1 876.59,543.9 877.59,543.9 877.84,540.3 879.34,540.3 879.59,527.1 881.59,527.1 881.84,517.4 882.09,507.7 882.34,498.0 883.59,498.0 883.84,480.7 885.09,480.7 885.33,463.3 886.83,463.3 887.08,450.2 888.08,450.2 888.33,410.1 890.08,410.1 890.33,395.2 892.83,395.2 893.08,399.3 893.83,399.3 894.08,425.1 895.58,425.1 895.83,471.1 896.83,471.1 897.08,522.3 898.83,522.3 899.08,570.8 899.57,570.8 899.82,594.0 900.07,617.1 900.32,640.3 901.57,640.3 901.82,654.1 906.32,654.1 906.57,634.3 907.32,634.3 907.57,611.2 907.82,588.1 908.82,588.1 909.07,558.2 911.57,558.2 911.82,573.2 912.82,573.2 913.07,597.1 914.56,597.1 914.81,600.4 915.06,603.7 915.31,606.9 915.56,610.2 917.06,610.2 917.31,614.4 917.56,618.6 917.81,622.8 919.31,622.8 919.56,620.8 919.81,618.9 920.06,617.0 920.31,615.0 921.31,615.0 921.56,601.0 921.81,586.9 922.81,586.9 923.06,533.7 924.81,533.7 925.06,515.9 925.31,498.0 928.80,498.0 929.05,506.8 930.30,506.8 930.55,527.1 932.05,527.1 932.30,564.2 933.80,564.2 934.05,601.3 934.80,601.3 934.80,825.5" fill="#d3d3d3"/>
<polygon points="792.90,825.5 792.90,671.1 796.65,671.1 796.90,675.3 798.90,675.3 799.15,665.8 800.89,665.8 801.14,634.2 801.89,634.2 802.14,604.7 804.14,604.7 804.39,603.2 806.64,603.2 806.89,617.9 808.39,617.9 808.64,626.8 809.89,626.8 810.14,634.2 810.89,634.2 811.14,642.1 812.39,642.1 812.64,643.6 812.89,645.0 813.14,646.4 813.39,647.9 814.63,647.9 814.88,641.1 815.13,634.2 817.13,634.2 817.38,608.9 818.13,608.9 818.38,603.8 818.63,598.7 818.88,593.6 819.13,588.5 819.38,583.4 819.63,578.3 819.88,573.2 820.13,568.1 820.38,563.0 821.88,563.0 822.13,547.1 825.88,547.1 826.13,577.3 826.63,577.3 826.88,612.0 828.87,612.0 829.12,638.5 831.62,638.5 831.87,645.7 833.62,645.7 833.87,655.3 835.62,655.3 835.87,641.5 836.12,627.6 836.37,613.8 837.12,613.8 837.37,586.1 841.87,586.1 842.12,581.3 844.11,581.3 844.36,549.8 846.11,549.8 846.36,527.1 846.86,527.1 847.11,513.2 847.36,499.2 848.86,499.2 849.11,460.9 850.11,460.9 850.36,436.2 852.11,436.2 852.36,419.1 853.11,419.1 853.36,391.0 856.61,391.0 856.85,403.9 857.85,403.9 858.10,413.1 859.10,413.1 859.35,426.3 860.60,426.3 860.85,487.2 861.85,487.2 862.10,549.8 863.35,549.8 863.60,600.7 866.85,600.7 867.10,609.6 868.35,609.6 868.60,615.6 869.10,615.6 869.35,609.0 871.59,609.0 871.84,542.1 874.09,542.1 874.34,535.1 876.34,535.1 876.59,543.9 877.59,543.9 877.84,540.3 879.34,540.3 879.59,527.1 881.59,527.1 881.84,517.4 882.09,507.7 882.34,498.0 883.59,498.0 883.84,480.7 885.09,480.7 885.33,463.3 886.83,463.3 887.08,450.2 888.08,450.2 888.33,410.1 890.08,410.1 890.33,395.2 892.83,395.2 893.08,399.3 893.83,399.3 894.08,425.1 895.58,425.1 895.83,471.1 896.83,471.1 897.08,522.3 898.83,522.3 899.08,570.8 899.57,570.8 899.82,594.0 900.07,617.1 900.32,640.3 901.57,640.3 901.82,654.1 906.32,654.1 906.57,634.3 907.32,634.3 907.57,611.2 907.82,588.1 908.82,588.1 909.07,558.2 911.57,558.2 911.82,573.2 912.82,573.2 913.07,597.1 914.56,597.1 914.81,600.4 915.06,603.7 915.31,606.9 915.56,610.2 917.06,610.2 917.31,614.4 917.56,618.6 917.81,622.8 919.31,622.8 919.56,620.8 919.81,618.9 920.06,617.0 920.31,615.0 921.31,615.0 921.56,601.0 921.81,586.9 922.81,586.9 923.06,533.7 924.81,533.7 925.06,515.9 925.31,498.0 928.80,498.0 929.05,506.8 930.30,506.8 930.55,527.1 932.05,527.1 932.30,564.2 933.80,564.2 934.05,601.3 934.80,601.3 934.80,825.5" fill="#767676"/>
<polygon points="792.90,825.5 792.90,671.1 796.65,671.1 796.90,675.3 798.90,675.3 799.15,665.8 800.89,665.8 801.14,647.9 806.64,647.9 806.89,617.9 808.39,617.9 808.64,626.8 809.89,626.8 810.14,634.2 810.89,634.2 811.14,642.1 812.39,642.1 812.64,643.6 812.89,645.0 813.14,646.4 813.39,647.9 814.63,647.9 814.88,641.1 815.13,634.2 817.13,634.2 817.38,608.9 818.13,608.9 818.38,628.9 819.88,628.9 820.13,647.9 831.87,647.9 832.12,651.3 832.37,654.7 833.62,654.7 833.87,655.3 835.62,655.3 835.87,648.1 840.12,648.1 840.37,629.5 841.87,629.5 842.12,601.7 842.86,601.7 843.11,582.6 844.86,582.6 845.11,563.5 845.61,563.5 845.86,554.5 848.86,554.5 849.11,563.5 849.61,563.5 849.86,582.6 851.86,582.6 852.11,601.7 852.86,601.7 853.11,629.5 854.36,629.5 854.61,648.1 875.34,648.1 875.59,629.5 876.84,629.5 877.09,601.7 877.84,601.7 878.09,582.6 880.09,582.6 880.34,563.5 880.84,563.5 881.09,554.5 883.84,554.5 884.09,563.5 884.84,563.5 885.09,582.6 886.83,582.6 887.08,601.7 887.83,601.7 888.08,629.5 889.33,629.5 889.58,648.1 899.57,648.1 899.82,654.1 907.57,654.1 907.82,648.1 910.32,648.1 910.57,629.5 911.82,629.5 912.07,601.7 912.82,601.7 913.07,597.1 914.56,597.1 914.81,600.4 915.06,603.7 915.31,606.9 915.56,610.2 917.06,610.2 917.31,614.4 917.56,618.6 917.81,622.8 919.31,622.8 919.56,620.8 919.81,618.9 920.06,617.0 920.31,615.0 921.31,615.0 921.56,601.0 921.81,586.9 922.06,601.7 922.81,601.7 923.06,629.5 924.31,629.5 924.56,648.1 934.80,648.1 934.80,825.5" fill="#3b73b0"/>
<polygon points="792.90,825.5 792.90,703.7 795.15,703.7 795.40,709.1 800.89,709.1 801.14,704.3 801.39,699.5 803.14,699.5 803.39,681.1 805.64,681.1 805.89,661.6 809.89,661.6 810.14,658.9 813.14,658.9 813.39,648.4 814.38,648.4 814.63,680.5 817.13,680.5 817.38,651.1 818.13,651.1 818.38,662.1 819.88,662.1 820.13,681.1 826.63,681.1 826.88,682.1 830.87,682.1 831.12,687.9 833.12,687.9 833.37,690.5 835.62,690.5 835.87,681.1 840.12,681.1 840.37,662.5 840.62,662.4 841.87,662.4 842.12,634.6 842.86,634.6 843.11,615.5 844.86,615.5 845.11,596.4 845.61,596.4 845.86,587.4 848.86,587.4 849.11,596.4 849.61,596.4 849.86,615.5 851.86,615.5 852.11,634.6 852.86,634.6 853.11,662.4 854.36,662.4 854.61,681.0 875.34,681.0 875.59,662.4 876.84,662.4 877.09,634.6 877.84,634.6 878.09,615.5 880.09,615.5 880.34,596.4 880.84,596.4 881.09,587.4 883.84,587.4 884.09,596.4 884.84,596.4 885.09,615.5 886.83,615.5 887.08,634.6 887.83,634.6 888.08,662.4 889.33,662.4 889.58,681.0 899.57,681.0 899.82,687.0 908.07,687.0 908.32,681.0 911.07,681.0 911.32,661.9 912.32,661.9 912.57,681.0 912.82,681.0 913.07,633.2 917.06,633.2 917.31,637.9 918.81,637.9 919.06,681.0 919.31,681.0 919.56,655.9 921.81,655.9 922.06,681.0 922.31,661.9 923.31,661.9 923.56,681.0 934.80,681.0 934.80,825.5" fill="#4a9a78"/>
<polygon points="792.90,825.5 792.90,825.5 805.39,825.5 805.64,806.9 806.89,806.9 807.14,779.1 807.89,779.1 808.14,760.0 809.89,760.0 810.14,740.9 810.89,740.9 811.14,731.9 813.89,731.9 814.14,740.9 814.88,740.9 815.13,760.0 816.88,760.0 817.13,779.1 817.88,779.1 818.13,806.9 819.38,806.9 819.63,825.5 840.12,825.5 840.37,806.9 841.87,806.9 842.12,779.1 842.86,779.1 843.11,760.0 844.86,760.0 845.11,740.9 845.61,740.9 845.86,731.9 848.86,731.9 849.11,740.9 849.61,740.9 849.86,760.0 851.86,760.0 852.11,779.1 852.86,779.1 853.11,806.9 854.36,806.9 854.61,825.5 875.34,825.5 875.59,806.9 876.84,806.9 877.09,779.1 877.84,779.1 878.09,760.0 880.09,760.0 880.34,740.9 880.84,740.9 881.09,731.9 883.84,731.9 884.09,740.9 884.84,740.9 885.09,760.0 886.83,760.0 887.08,779.1 887.83,779.1 888.08,806.9 889.33,806.9 889.58,825.5 910.32,825.5 910.57,806.9 911.82,806.9 912.07,779.1 912.82,779.1 913.07,760.0 914.81,760.0 915.06,740.9 915.81,740.9 916.06,731.9 918.81,731.9 919.06,740.9 919.56,740.9 919.81,760.0 921.81,760.0 922.06,779.1 922.81,779.1 923.06,806.9 924.31,806.9 924.56,825.5 934.80,825.5 934.80,825.5" fill="#e8b262"/>
<polygon points="962.10,825.5 962.10,634.1 966.10,634.1 966.35,638.4 967.85,638.4 968.10,627.3 970.09,627.3 970.34,584.5 971.09,584.5 971.34,547.9 972.84,547.9 973.09,544.1 975.84,544.1 976.09,562.3 977.59,562.3 977.84,575.2 979.59,575.2 979.84,585.3 981.09,585.3 981.34,596.0 982.59,596.0 982.84,603.9 984.33,603.9 984.58,588.1 986.08,588.1 986.33,558.0 986.83,558.0 987.08,522.0 988.83,522.0 989.08,514.9 989.33,507.8 989.58,500.7 989.83,493.6 990.08,486.5 990.33,479.4 994.83,479.4 995.08,516.9 996.33,516.9 996.58,560.6 998.07,560.6 998.32,591.0 1001.07,591.0 1001.32,604.2 1002.57,604.2 1002.82,613.2 1003.57,613.2 1003.82,601.8 1005.32,601.8 1005.57,561.7 1006.07,561.7 1006.32,524.1 1009.57,524.1 1009.82,518.7 1011.32,518.7 1011.57,513.3 1012.07,513.3 1012.31,488.4 1014.06,488.4 1014.31,465.7 1015.06,465.7 1015.31,435.8 1016.06,435.8 1016.31,396.1 1017.56,396.1 1017.81,369.7 1018.06,343.3 1019.06,343.3 1019.31,311.2 1021.06,311.2 1021.31,291.9 1022.06,291.9 1022.31,254.2 1025.56,254.2 1025.81,272.7 1026.55,272.7 1026.80,288.0 1028.55,288.0 1028.80,309.2 1029.55,309.2 1029.80,349.6 1030.05,390.1 1031.55,390.1 1031.80,472.8 1032.80,472.8 1033.05,546.8 1035.30,546.8 1035.55,558.2 1036.80,558.2 1037.05,564.1 1038.30,564.1 1038.55,558.2 1040.05,558.2 1040.30,518.1 1041.04,518.1 1041.29,494.6 1041.54,471.0 1043.04,471.0 1043.29,461.1 1046.04,461.1 1046.29,470.2 1047.79,470.2 1048.04,462.1 1049.79,462.1 1050.04,424.4 1051.29,424.4 1051.54,402.0 1052.79,402.0 1053.04,380.2 1053.79,380.2 1054.04,368.6 1054.29,357.0 1055.78,357.0 1056.03,343.9 1057.03,343.9 1057.28,291.9 1059.03,291.9 1059.28,273.9 1061.78,273.9 1062.03,282.0 1063.78,282.0 1064.03,315.8 1064.78,315.8 1065.03,346.5 1065.28,377.2 1066.53,377.2 1066.78,444.1 1067.53,444.1 1067.78,475.4 1068.03,506.7 1068.78,506.7 1069.03,597.0 1070.52,597.0 1070.77,607.8 1072.27,607.8 1072.52,612.6 1074.77,612.6 1075.02,598.2 1075.27,598.2 1075.52,526.6 1078.02,526.6 1078.27,489.1 1080.77,489.1 1081.02,506.8 1083.02,506.8 1083.27,545.3 1086.26,545.3 1086.51,571.7 1088.51,571.7 1088.76,564.0 1091.01,564.0 1091.26,531.0 1092.51,531.0 1092.76,466.0 1094.01,466.0 1094.26,419.8 1099.50,419.8 1099.75,456.1 1101.75,456.1 1102.00,548.6 1104.00,548.6 1104.25,561.8 1105.00,561.8 1105.00,825.5" fill="#d3d3d3"/>
<polygon points="962.10,825.5 962.10,634.1 966.10,634.1 966.35,638.4 967.85,638.4 968.10,627.3 970.09,627.3 970.34,584.5 971.09,584.5 971.34,547.9 972.84,547.9 973.09,544.1 975.84,544.1 976.09,562.3 977.59,562.3 977.84,575.2 979.59,575.2 979.84,585.3 981.09,585.3 981.34,596.0 982.59,596.0 982.84,603.9 984.33,603.9 984.58,588.1 986.08,588.1 986.33,558.0 986.83,558.0 987.08,522.0 988.83,522.0 989.08,514.9 989.33,507.8 989.58,500.7 989.83,493.6 990.08,486.5 990.33,479.4 994.83,479.4 995.08,516.9 996.33,516.9 996.58,560.6 998.07,560.6 998.32,591.0 1001.07,591.0 1001.32,604.2 1002.57,604.2 1002.82,613.2 1003.57,613.2 1003.82,601.8 1005.32,601.8 1005.57,561.7 1006.07,561.7 1006.32,524.1 1009.57,524.1 1009.82,518.7 1011.32,518.7 1011.57,513.3 1012.07,513.3 1012.31,488.4 1014.06,488.4 1014.31,465.7 1015.06,465.7 1015.31,435.8 1016.06,435.8 1016.31,396.1 1017.56,396.1 1017.81,369.7 1018.06,343.3 1019.06,343.3 1019.31,311.2 1021.06,311.2 1021.31,291.9 1022.06,291.9 1022.31,254.2 1025.56,254.2 1025.81,272.7 1026.55,272.7 1026.80,288.0 1028.55,288.0 1028.80,309.2 1029.55,309.2 1029.80,349.6 1030.05,390.1 1031.55,390.1 1031.80,472.8 1032.80,472.8 1033.05,546.8 1035.30,546.8 1035.55,558.2 1036.80,558.2 1037.05,564.1 1038.30,564.1 1038.55,558.2 1040.05,558.2 1040.30,518.1 1041.04,518.1 1041.29,494.6 1041.54,471.0 1043.04,471.0 1043.29,461.1 1046.04,461.1 1046.29,470.2 1047.79,470.2 1048.04,462.1 1049.79,462.1 1050.04,424.4 1051.29,424.4 1051.54,402.0 1052.79,402.0 1053.04,380.2 1053.79,380.2 1054.04,368.6 1054.29,357.0 1055.78,357.0 1056.03,343.9 1057.03,343.9 1057.28,291.9 1059.03,291.9 1059.28,273.9 1061.78,273.9 1062.03,282.0 1063.78,282.0 1064.03,315.8 1064.78,315.8 1065.03,346.5 1065.28,377.2 1066.53,377.2 1066.78,444.1 1067.53,444.1 1067.78,475.4 1068.03,506.7 1068.78,506.7 1069.03,597.0 1070.52,597.0 1070.77,607.8 1072.27,607.8 1072.52,612.6 1074.77,612.6 1075.02,598.2 1075.27,598.2 1075.52,526.6 1078.02,526.6 1078.27,489.1 1080.77,489.1 1081.02,506.8 1083.02,506.8 1083.27,545.3 1086.26,545.3 1086.51,571.7 1088.51,571.7 1088.76,564.0 1091.01,564.0 1091.26,531.0 1092.51,531.0 1092.76,466.0 1094.01,466.0 1094.26,419.8 1099.50,419.8 1099.75,456.1 1101.75,456.1 1102.00,548.6 1104.00,548.6 1104.25,561.8 1105.00,561.8 1105.00,825.5" fill="#767676"/>
<polygon points="962.10,825.5 962.10,634.1 966.10,634.1 966.35,638.4 967.85,638.4 968.10,627.3 970.09,627.3 970.34,584.5 972.84,584.5 973.09,544.1 975.84,544.1 976.09,562.3 977.59,562.3 977.84,575.2 979.59,575.2 979.84,585.3 981.09,585.3 981.34,596.0 982.59,596.0 982.84,603.9 984.33,603.9 984.58,588.1 986.08,588.1 986.33,562.3 996.83,562.3 997.08,573.1 998.07,573.1 998.32,591.0 1001.07,591.0 1001.32,604.2 1002.57,604.2 1002.82,613.2 1003.57,613.2 1003.82,601.8 1005.32,601.8 1005.57,561.7 1009.57,561.7 1009.82,538.1 1011.07,538.1 1011.32,518.7 1011.57,513.3 1012.07,513.3 1012.31,503.1 1012.56,503.1 1012.81,488.4 1014.06,488.4 1014.31,479.2 1014.56,465.7 1015.06,465.7 1015.31,455.3 1015.56,455.3 1015.81,443.0 1017.81,443.0 1018.06,455.3 1019.06,455.3 1019.31,479.2 1020.56,479.2 1020.81,503.1 1022.06,503.1 1022.31,538.1 1023.81,538.1 1024.06,561.7 1036.80,561.7 1037.05,564.1 1038.30,564.1 1038.55,561.7 1044.54,561.7 1044.79,538.1 1046.29,538.1 1046.54,503.1 1047.79,503.1 1048.04,479.2 1049.29,479.2 1049.54,462.1 1049.79,462.1 1050.04,455.3 1050.54,455.3 1050.79,443.0 1052.79,443.0 1053.04,455.3 1054.04,455.3 1054.29,479.2 1055.78,479.2 1056.03,503.1 1057.28,503.1 1057.53,538.1 1058.78,538.1 1059.03,561.7 1068.78,561.7 1069.03,597.0 1070.52,597.0 1070.77,607.8 1072.27,607.8 1072.52,612.6 1074.77,612.6 1075.02,598.2 1075.27,598.2 1075.52,561.7 1079.52,561.7 1079.77,538.1 1081.02,538.1 1081.27,506.8 1083.02,506.8 1083.27,545.3 1086.26,545.3 1086.51,571.7 1088.51,571.7 1088.76,564.0 1091.01,564.0 1091.26,531.0 1092.01,531.0 1092.26,538.1 1093.51,538.1 1093.76,561.7 1104.00,561.7 1104.25,561.8 1105.00,561.8 1105.00,825.5" fill="#3b73b0"/>
<polygon points="962.10,825.5 962.10,667.1 963.10,667.1 963.35,672.8 969.59,672.8 969.84,659.9 971.84,659.9 972.09,619.0 972.84,619.0 973.09,594.6 976.09,594.6 976.34,607.5 977.59,607.5 977.84,616.1 980.34,616.1 980.59,640.5 984.83,640.5 985.08,620.4 987.58,620.4 987.83,593.2 995.58,593.2 995.83,596.7 996.58,596.7 996.83,638.4 1000.57,638.4 1000.82,649.1 1004.82,649.1 1005.07,636.2 1005.32,636.2 1005.57,594.0 1009.57,594.0 1009.82,570.4 1011.07,570.4 1011.32,535.4 1012.56,535.4 1012.81,511.5 1014.31,511.5 1014.56,487.6 1015.56,487.6 1015.81,475.3 1017.81,475.3 1018.06,487.6 1019.06,487.6 1019.31,511.5 1020.56,511.5 1020.81,535.4 1022.06,535.4 1022.31,570.4 1023.81,570.4 1024.06,594.0 1033.30,594.0 1033.55,595.2 1035.80,595.2 1036.05,600.0 1039.30,600.0 1039.55,594.0 1044.79,594.0 1045.04,570.4 1046.29,570.4 1046.54,535.4 1047.79,535.4 1048.04,511.5 1049.29,511.5 1049.54,487.6 1050.54,487.6 1050.79,475.3 1052.79,475.3 1053.04,487.6 1054.04,487.6 1054.29,511.5 1055.78,511.5 1056.03,535.4 1057.28,535.4 1057.53,570.4 1058.78,570.4 1059.03,594.0 1066.78,594.0 1067.03,629.9 1069.28,629.9 1069.52,646.0 1076.52,646.0 1076.77,619.7 1077.77,619.7 1078.02,594.0 1080.02,594.0 1080.27,571.3 1081.77,571.3 1082.02,578.5 1084.26,578.5 1084.51,590.4 1086.01,590.4 1086.26,600.0 1088.51,600.0 1088.76,606.6 1090.76,606.6 1091.01,598.8 1092.51,598.8 1092.76,571.3 1093.76,571.3 1094.01,594.0 1105.00,594.0 1105.00,825.5" fill="#4a9a78"/>
<polygon points="962.10,825.5 962.10,825.5 974.84,825.5 975.09,801.9 976.34,801.9 976.59,766.9 977.84,766.9 978.09,743.0 979.34,743.0 979.59,719.1 980.59,719.1 980.84,706.8 982.84,706.8 983.09,719.1 984.08,719.1 984.33,743.0 985.83,743.0 986.08,766.9 987.33,766.9 987.58,801.9 988.83,801.9 989.08,825.5 1009.57,825.5 1009.82,801.9 1011.07,801.9 1011.32,766.9 1012.56,766.9 1012.81,743.0 1014.31,743.0 1014.56,719.1 1015.56,719.1 1015.81,706.8 1017.81,706.8 1018.06,719.1 1019.06,719.1 1019.31,743.0 1020.56,743.0 1020.81,766.9 1022.06,766.9 1022.31,801.9 1023.81,801.9 1024.06,825.5 1044.54,825.5 1044.79,801.9 1046.29,801.9 1046.54,766.9 1047.79,766.9 1048.04,743.0 1049.29,743.0 1049.54,719.1 1050.54,719.1 1050.79,706.8 1052.79,706.8 1053.04,719.1 1054.04,719.1 1054.29,743.0 1055.78,743.0 1056.03,766.9 1057.28,766.9 1057.53,801.9 1058.78,801.9 1059.03,825.5 1079.52,825.5 1079.77,801.9 1081.02,801.9 1081.27,766.9 1082.52,766.9 1082.77,743.0 1084.26,743.0 1084.51,719.1 1085.51,719.1 1085.76,706.8 1087.76,706.8 1088.01,719.1 1089.01,719.1 1089.26,743.0 1090.51,743.0 1090.76,766.9 1092.01,766.9 1092.26,801.9 1093.51,801.9 1093.76,825.5 1105.00,825.5 1105.00,825.5" fill="#e8b262"/>
<rect x="452" y="243.3" width="2" height="583.2" fill="#bfbfbf"/>
<rect x="446" y="824.9" width="6" height="1.3" fill="#cfcfcf"/>
<text x="441.2" y="830.6" font-size="14" fill="#333" stroke="#333" stroke-width="0.06" text-anchor="end" >0</text>
<rect x="448.8" y="811.4" width="3.2" height="1.3" fill="#cfcfcf"/>
<rect x="448.8" y="797.9" width="3.2" height="1.3" fill="#cfcfcf"/>
<rect x="448.8" y="784.4" width="3.2" height="1.3" fill="#cfcfcf"/>
<rect x="446" y="770.9" width="6" height="1.3" fill="#cfcfcf"/>
<text x="441.2" y="776.64" font-size="14" fill="#333" stroke="#333" stroke-width="0.06" text-anchor="end" >100</text>
<rect x="448.8" y="757.4" width="3.2" height="1.3" fill="#cfcfcf"/>
<rect x="448.8" y="744.0" width="3.2" height="1.3" fill="#cfcfcf"/>
<rect x="448.8" y="730.5" width="3.2" height="1.3" fill="#cfcfcf"/>
<rect x="446" y="717.0" width="6" height="1.3" fill="#cfcfcf"/>
<text x="441.2" y="722.6800000000001" font-size="14" fill="#333" stroke="#333" stroke-width="0.06" text-anchor="end" >200</text>
<rect x="448.8" y="703.5" width="3.2" height="1.3" fill="#cfcfcf"/>
<rect x="448.8" y="690.0" width="3.2" height="1.3" fill="#cfcfcf"/>
<rect x="448.8" y="676.5" width="3.2" height="1.3" fill="#cfcfcf"/>
<rect x="446" y="663.0" width="6" height="1.3" fill="#cfcfcf"/>
<text x="441.2" y="668.72" font-size="14" fill="#333" stroke="#333" stroke-width="0.06" text-anchor="end" >300</text>
<rect x="448.8" y="649.5" width="3.2" height="1.3" fill="#cfcfcf"/>
<rect x="448.8" y="636.0" width="3.2" height="1.3" fill="#cfcfcf"/>
<rect x="448.8" y="622.5" width="3.2" height="1.3" fill="#cfcfcf"/>
<rect x="446" y="609.1" width="6" height="1.3" fill="#cfcfcf"/>
<text x="441.2" y="614.7600000000001" font-size="14" fill="#333" stroke="#333" stroke-width="0.06" text-anchor="end" >400</text>
<rect x="448.8" y="595.6" width="3.2" height="1.3" fill="#cfcfcf"/>
<rect x="448.8" y="582.1" width="3.2" height="1.3" fill="#cfcfcf"/>
<rect x="448.8" y="568.6" width="3.2" height="1.3" fill="#cfcfcf"/>
<rect x="446" y="555.1" width="6" height="1.3" fill="#cfcfcf"/>
<text x="441.2" y="560.8000000000001" font-size="14" fill="#333" stroke="#333" stroke-width="0.06" text-anchor="end" >500</text>
<rect x="448.8" y="541.6" width="3.2" height="1.3" fill="#cfcfcf"/>
<rect x="448.8" y="528.1" width="3.2" height="1.3" fill="#cfcfcf"/>
<rect x="448.8" y="514.6" width="3.2" height="1.3" fill="#cfcfcf"/>
<rect x="446" y="501.1" width="6" height="1.3" fill="#cfcfcf"/>
<text x="441.2" y="506.84000000000003" font-size="14" fill="#333" stroke="#333" stroke-width="0.06" text-anchor="end" >600</text>
<rect x="448.8" y="487.6" width="3.2" height="1.3" fill="#cfcfcf"/>
<rect x="448.8" y="474.2" width="3.2" height="1.3" fill="#cfcfcf"/>
<rect x="448.8" y="460.7" width="3.2" height="1.3" fill="#cfcfcf"/>
<rect x="446" y="447.2" width="6" height="1.3" fill="#cfcfcf"/>
<text x="441.2" y="452.88000000000005" font-size="14" fill="#333" stroke="#333" stroke-width="0.06" text-anchor="end" >700</text>
<rect x="448.8" y="433.7" width="3.2" height="1.3" fill="#cfcfcf"/>
<rect x="448.8" y="420.2" width="3.2" height="1.3" fill="#cfcfcf"/>
<rect x="448.8" y="406.7" width="3.2" height="1.3" fill="#cfcfcf"/>
<rect x="446" y="393.2" width="6" height="1.3" fill="#cfcfcf"/>
<text x="441.2" y="398.9200000000001" font-size="14" fill="#333" stroke="#333" stroke-width="0.06" text-anchor="end" >800</text>
<rect x="448.8" y="379.7" width="3.2" height="1.3" fill="#cfcfcf"/>
<rect x="448.8" y="366.2" width="3.2" height="1.3" fill="#cfcfcf"/>
<rect x="448.8" y="352.8" width="3.2" height="1.3" fill="#cfcfcf"/>
<rect x="446" y="339.3" width="6" height="1.3" fill="#cfcfcf"/>
<text x="441.2" y="344.96000000000004" font-size="14" fill="#333" stroke="#333" stroke-width="0.06" text-anchor="end" >900</text>
<rect x="448.8" y="325.8" width="3.2" height="1.3" fill="#cfcfcf"/>
<rect x="448.8" y="312.3" width="3.2" height="1.3" fill="#cfcfcf"/>
<rect x="448.8" y="298.8" width="3.2" height="1.3" fill="#cfcfcf"/>
<rect x="446" y="285.3" width="6" height="1.3" fill="#cfcfcf"/>
<text x="441.2" y="291.0" font-size="14" fill="#333" stroke="#333" stroke-width="0.06" text-anchor="end" >1,000</text>
<rect x="448.8" y="271.8" width="3.2" height="1.3" fill="#cfcfcf"/>
<rect x="448.8" y="258.3" width="3.2" height="1.3" fill="#cfcfcf"/>
<rect x="452" y="825.0" width="653" height="2" fill="#bfbfbf"/>
<rect x="454.9" y="827" width="1.3" height="6.5" fill="#cfcfcf"/>
<text x="0" y="0" font-size="14.3" fill="#333" text-anchor="end" transform="translate(462.4 848.4) rotate(-90)">2020, Spring: Hr 1</text>
<rect x="475.4" y="827" width="1.3" height="6.5" fill="#cfcfcf"/>
<text x="0" y="0" font-size="14.3" fill="#333" text-anchor="end" transform="translate(482.9 848.4) rotate(-90)">2020, Spring: Hr 15</text>
<rect x="495.9" y="827" width="1.3" height="6.5" fill="#cfcfcf"/>
<text x="0" y="0" font-size="14.3" fill="#333" text-anchor="end" transform="translate(503.4 848.4) rotate(-90)">2020, Summer: Hr 5</text>
<rect x="516.3" y="827" width="1.3" height="6.5" fill="#cfcfcf"/>
<text x="0" y="0" font-size="14.3" fill="#333" text-anchor="end" transform="translate(523.8 848.4) rotate(-90)">2020, Summer: Hr 19</text>
<rect x="536.8" y="827" width="1.3" height="6.5" fill="#cfcfcf"/>
<text x="0" y="0" font-size="14.3" fill="#333" text-anchor="end" transform="translate(544.3 848.4) rotate(-90)">2020, Fall: Hr 9</text>
<rect x="557.3" y="827" width="1.3" height="6.5" fill="#cfcfcf"/>
<text x="0" y="0" font-size="14.3" fill="#333" text-anchor="end" transform="translate(564.8 848.4) rotate(-90)">2020, Fall: Hr 23</text>
<rect x="577.8" y="827" width="1.3" height="6.5" fill="#cfcfcf"/>
<text x="0" y="0" font-size="14.3" fill="#333" text-anchor="end" transform="translate(585.3 848.4) rotate(-90)">2020, Winter: Hr 13</text>
<rect x="455.8" y="242.8" width="47.8" height="27.3" rx="3" fill="#fff" stroke="#ababab" stroke-width="1.4"/>
<text x="460.2" y="261.8" font-size="15.5" fill="#222" stroke="#222" stroke-width="0.06" text-anchor="start" >2020</text>
<rect x="623.8" y="827" width="1.3" height="6.5" fill="#cfcfcf"/>
<text x="0" y="0" font-size="14.3" fill="#333" text-anchor="end" transform="translate(631.3 848.4) rotate(-90)">2030, Spring: Hr 1</text>
<rect x="644.3" y="827" width="1.3" height="6.5" fill="#cfcfcf"/>
<text x="0" y="0" font-size="14.3" fill="#333" text-anchor="end" transform="translate(651.8 848.4) rotate(-90)">2030, Spring: Hr 15</text>
<rect x="664.8" y="827" width="1.3" height="6.5" fill="#cfcfcf"/>
<text x="0" y="0" font-size="14.3" fill="#333" text-anchor="end" transform="translate(672.3 848.4) rotate(-90)">2030, Summer: Hr 5</text>
<rect x="685.2" y="827" width="1.3" height="6.5" fill="#cfcfcf"/>
<text x="0" y="0" font-size="14.3" fill="#333" text-anchor="end" transform="translate(692.7 848.4) rotate(-90)">2030, Summer: Hr 19</text>
<rect x="705.7" y="827" width="1.3" height="6.5" fill="#cfcfcf"/>
<text x="0" y="0" font-size="14.3" fill="#333" text-anchor="end" transform="translate(713.2 848.4) rotate(-90)">2030, Fall: Hr 9</text>
<rect x="726.2" y="827" width="1.3" height="6.5" fill="#cfcfcf"/>
<text x="0" y="0" font-size="14.3" fill="#333" text-anchor="end" transform="translate(733.7 848.4) rotate(-90)">2030, Fall: Hr 23</text>
<rect x="746.7" y="827" width="1.3" height="6.5" fill="#cfcfcf"/>
<text x="0" y="0" font-size="14.3" fill="#333" text-anchor="end" transform="translate(754.2 848.4) rotate(-90)">2030, Winter: Hr 13</text>
<rect x="624.7" y="242.8" width="47.8" height="27.3" rx="3" fill="#fff" stroke="#ababab" stroke-width="1.4"/>
<text x="629.1" y="261.8" font-size="15.5" fill="#222" stroke="#222" stroke-width="0.06" text-anchor="start" >2030</text>
<rect x="792.6" y="827" width="1.3" height="6.5" fill="#cfcfcf"/>
<text x="0" y="0" font-size="14.3" fill="#333" text-anchor="end" transform="translate(800.1 848.4) rotate(-90)">2040, Spring: Hr 1</text>
<rect x="813.1" y="827" width="1.3" height="6.5" fill="#cfcfcf"/>
<text x="0" y="0" font-size="14.3" fill="#333" text-anchor="end" transform="translate(820.6 848.4) rotate(-90)">2040, Spring: Hr 15</text>
<rect x="833.6" y="827" width="1.3" height="6.5" fill="#cfcfcf"/>
<text x="0" y="0" font-size="14.3" fill="#333" text-anchor="end" transform="translate(841.1 848.4) rotate(-90)">2040, Summer: Hr 5</text>
<rect x="854.0" y="827" width="1.3" height="6.5" fill="#cfcfcf"/>
<text x="0" y="0" font-size="14.3" fill="#333" text-anchor="end" transform="translate(861.5 848.4) rotate(-90)">2040, Summer: Hr 19</text>
<rect x="874.5" y="827" width="1.3" height="6.5" fill="#cfcfcf"/>
<text x="0" y="0" font-size="14.3" fill="#333" text-anchor="end" transform="translate(882.0 848.4) rotate(-90)">2040, Fall: Hr 9</text>
<rect x="895.0" y="827" width="1.3" height="6.5" fill="#cfcfcf"/>
<text x="0" y="0" font-size="14.3" fill="#333" text-anchor="end" transform="translate(902.5 848.4) rotate(-90)">2040, Fall: Hr 23</text>
<rect x="915.5" y="827" width="1.3" height="6.5" fill="#cfcfcf"/>
<text x="0" y="0" font-size="14.3" fill="#333" text-anchor="end" transform="translate(923.0 848.4) rotate(-90)">2040, Winter: Hr 13</text>
<rect x="793.5" y="242.8" width="47.8" height="27.3" rx="3" fill="#fff" stroke="#ababab" stroke-width="1.4"/>
<text x="797.9" y="261.8" font-size="15.5" fill="#222" stroke="#222" stroke-width="0.06" text-anchor="start" >2040</text>
<rect x="961.7" y="827" width="1.3" height="6.5" fill="#cfcfcf"/>
<text x="0" y="0" font-size="14.3" fill="#333" text-anchor="end" transform="translate(969.2 848.4) rotate(-90)">2050, Spring: Hr 1</text>
<rect x="982.2" y="827" width="1.3" height="6.5" fill="#cfcfcf"/>
<text x="0" y="0" font-size="14.3" fill="#333" text-anchor="end" transform="translate(989.7 848.4) rotate(-90)">2050, Spring: Hr 15</text>
<rect x="1002.7" y="827" width="1.3" height="6.5" fill="#cfcfcf"/>
<text x="0" y="0" font-size="14.3" fill="#333" text-anchor="end" transform="translate(1010.2 848.4) rotate(-90)">2050, Summer: Hr 5</text>
<rect x="1023.1" y="827" width="1.3" height="6.5" fill="#cfcfcf"/>
<text x="0" y="0" font-size="14.3" fill="#333" text-anchor="end" transform="translate(1030.6 848.4) rotate(-90)">2050, Summer: Hr 19</text>
<rect x="1043.6" y="827" width="1.3" height="6.5" fill="#cfcfcf"/>
<text x="0" y="0" font-size="14.3" fill="#333" text-anchor="end" transform="translate(1051.1 848.4) rotate(-90)">2050, Fall: Hr 9</text>
<rect x="1064.1" y="827" width="1.3" height="6.5" fill="#cfcfcf"/>
<text x="0" y="0" font-size="14.3" fill="#333" text-anchor="end" transform="translate(1071.6 848.4) rotate(-90)">2050, Fall: Hr 23</text>
<rect x="1084.6" y="827" width="1.3" height="6.5" fill="#cfcfcf"/>
<text x="0" y="0" font-size="14.3" fill="#333" text-anchor="end" transform="translate(1092.1 848.4) rotate(-90)">2050, Winter: Hr 13</text>
<rect x="962.6" y="242.8" width="47.8" height="27.3" rx="3" fill="#fff" stroke="#ababab" stroke-width="1.4"/>
<text x="967.0" y="261.8" font-size="15.5" fill="#222" stroke="#222" stroke-width="0.06" text-anchor="start" >2050</text>
<rect x="1114.5" y="243.5" width="181" height="206.5" fill="#eef3fa" stroke="#ababab" stroke-width="1.4"/>
<defs><pattern id="hatch" patternUnits="userSpaceOnUse" width="5" height="5" patternTransform="rotate(-45)"><rect width="5" height="5" fill="#c84a2c"/><rect x="0" y="0" width="1.5" height="5" fill="#f0c8bb"/></pattern></defs>
<rect x="1121" y="252.2" width="12.7" height="12.7" rx="2" fill="#2f7bd8"/>
<path d="M1123.8 258.7 l2.6 2.8 l4.6 -5.6" stroke="#fff" stroke-width="1.3" fill="none"/>
<rect x="1139.7" y="249.3" width="18.3" height="18.4" fill="url(#hatch)"/>
<text x="1165.3" y="263.7" font-size="14.4" fill="#222" stroke="#222" stroke-width="0.06" text-anchor="start" >Energy Storage</text>
<rect x="1121" y="277.2" width="12.7" height="12.7" rx="2" fill="#2f7bd8"/>
<path d="M1123.8 283.7 l2.6 2.8 l4.6 -5.6" stroke="#fff" stroke-width="1.3" fill="none"/>
<rect x="1139.7" y="274.3" width="18.3" height="18.4" fill="#d3d3d3"/>
<text x="1165.3" y="288.72999999999996" font-size="14.4" fill="#222" stroke="#222" stroke-width="0.06" text-anchor="start" >Natural Gas GT</text>
<rect x="1121" y="302.3" width="12.7" height="12.7" rx="2" fill="#2f7bd8"/>
<path d="M1123.8 308.8 l2.6 2.8 l4.6 -5.6" stroke="#fff" stroke-width="1.3" fill="none"/>
<rect x="1139.7" y="299.4" width="18.3" height="18.4" fill="#767676"/>
<text x="1165.3" y="313.76" font-size="14.4" fill="#222" stroke="#222" stroke-width="0.06" text-anchor="start" >Natural Gas CC</text>
<rect x="1121" y="327.3" width="12.7" height="12.7" rx="2" fill="#2f7bd8"/>
<path d="M1123.8 333.8 l2.6 2.8 l4.6 -5.6" stroke="#fff" stroke-width="1.3" fill="none"/>
<rect x="1139.7" y="324.4" width="18.3" height="18.4" fill="#3b73b0"/>
<text x="1165.3" y="338.79" font-size="14.4" fill="#222" stroke="#222" stroke-width="0.06" text-anchor="start" >Hydro</text>
<rect x="1121" y="352.3" width="12.7" height="12.7" rx="2" fill="#2f7bd8"/>
<path d="M1123.8 358.8 l2.6 2.8 l4.6 -5.6" stroke="#fff" stroke-width="1.3" fill="none"/>
<rect x="1139.7" y="349.4" width="18.3" height="18.4" fill="#4a9a78"/>
<text x="1165.3" y="363.82" font-size="14.4" fill="#222" stroke="#222" stroke-width="0.06" text-anchor="start" >Wind</text>
<rect x="1121" y="377.3" width="12.7" height="12.7" rx="2" fill="#2f7bd8"/>
<path d="M1123.8 383.8 l2.6 2.8 l4.6 -5.6" stroke="#fff" stroke-width="1.3" fill="none"/>
<rect x="1139.7" y="374.4" width="18.3" height="18.4" fill="#e8b262"/>
<text x="1165.3" y="388.84999999999997" font-size="14.4" fill="#222" stroke="#222" stroke-width="0.06" text-anchor="start" >Solar PV</text>
<rect x="1121" y="402.4" width="12.7" height="12.7" rx="2" fill="#2f7bd8"/>
<path d="M1123.8 408.9 l2.6 2.8 l4.6 -5.6" stroke="#fff" stroke-width="1.3" fill="none"/>
<rect x="1139.7" y="399.5" width="18.3" height="18.4" fill="#e07a50"/>
<text x="1165.3" y="413.88" font-size="14.4" fill="#222" stroke="#222" stroke-width="0.06" text-anchor="start" >Coal</text>
<rect x="1121" y="427.4" width="12.7" height="12.7" rx="2" fill="#2f7bd8"/>
<path d="M1123.8 433.9 l2.6 2.8 l4.6 -5.6" stroke="#fff" stroke-width="1.3" fill="none"/>
<rect x="1139.7" y="424.5" width="18.3" height="18.4" fill="#c84a2c"/>
<text x="1165.3" y="438.91" font-size="14.4" fill="#222" stroke="#222" stroke-width="0.06" text-anchor="start" >Nuclear</text>
<rect x="1314.1" y="188" width="3.6" height="7.8" fill="#3d74b4"/><rect x="1319" y="181.7" width="3.4" height="14.1" fill="#3d74b4"/><rect x="1324.4" y="185" width="3.4" height="10.8" fill="#3d74b4"/>
<path d="M1321.5 188.5 L1329.5 195 L1326 195.5 L1328.5 199 L1326.5 200.3 L1324.2 196.8 L1321.8 199.3 z" fill="#777" stroke="#eef3fa" stroke-width="0.8" stroke-linejoin="round"/>
<rect x="1314.4" y="210.6" width="15.4" height="1.2" fill="#999"/><path d="M1321.8 207.8 l3.4 3.4 l-3.4 3.4 l-3.4 -3.4 z" fill="#888"/>
<rect x="1316" y="227.5" width="3" height="3.5" fill="#f08cb0"/>
<rect x="1316" y="231" width="3" height="3.5" fill="#e03c5c"/>
<rect x="1316" y="234.5" width="3" height="3.5" fill="#c81e3c"/>
<rect x="1316" y="238" width="3" height="2.7" fill="#999"/>
<rect x="1319.5" y="229" width="3" height="4" fill="#f0b400"/>
<rect x="1322" y="226.5" width="3" height="4" fill="#ffd400"/>
<rect x="1324.5" y="231" width="4" height="4" fill="#3cc050"/>
<rect x="1319" y="235" width="4" height="5.7" fill="#2050a0"/>
<rect x="1323" y="236" width="3" height="4.7" fill="#2080d0"/>
<rect x="1326" y="236" width="3.3" height="4.7" fill="#40c0f0"/>
<text x="1321.8" y="260.1" font-family="Liberation Mono" font-weight="bold" font-size="12" fill="#8a8a8a" text-anchor="middle">Y0</text>
<circle cx="1321.8" cy="278" r="5.5" fill="none" stroke="#8a8a8a" stroke-width="1"/><text x="1321.8" y="280.3" font-size="6" fill="#8a8a8a" text-anchor="middle">3D</text>
<text x="1322" y="303" font-size="8.5" font-weight="bold" fill="#111" text-anchor="middle">Log</text>
<text x="1320.8" y="329.6" font-size="19" fill="#555" text-anchor="middle">A</text><path d="M1324.4 318.8 l2.7 -3.4 l2.7 3.4z" fill="#3d74b4"/>
<text x="1320" y="351.6" font-size="16" fill="#555" text-anchor="middle">A</text><path d="M1324.4 336 h5.4 l-2.7 3.4z" fill="#3d74b4"/>
<text x="1317.5" y="368" font-size="10" fill="#e05050" text-anchor="middle">A</text><text x="1323.1" y="373" font-size="17" fill="#3d74b4" text-anchor="middle">A</text>
<rect x="1314.6" y="380.7" width="14.7" height="14.6" fill="#fff" stroke="#555" stroke-width="1.1"/>
<rect x="1315" y="406.2" width="13.9" height="4.8" fill="#e8b565"/><rect x="1321.4" y="412" width="1.2" height="3.3" fill="#555"/>
<text x="0" y="0" font-size="11" font-weight="bold" fill="#222" transform="translate(1326.5 438.5) rotate(-90)">ab</text><rect x="1327.5" y="425.5" width="0.9" height="12.5" fill="#777"/>
<rect x="1314.1" y="449.5" width="15.9" height="10.3" rx="1.2" fill="#3d74b4"/><rect x="1317" y="447.2" width="5" height="3" fill="#3d74b4"/><circle cx="1323.5" cy="454.6" r="3.2" fill="#eef3fa"/><circle cx="1323.5" cy="454.6" r="2" fill="#3d74b4"/>
<rect x="1317.5" y="468.4" width="9.5" height="4.5" rx="1" fill="#3d74b4"/><rect x="1314.1" y="472.5" width="16.4" height="7.5" rx="1.5" fill="#777"/><rect x="1317" y="477.5" width="10.5" height="6.4" fill="#fff" stroke="#777" stroke-width="0.9"/>
<path d="M1314.6 490.5 h6 l2.5 2.5 v9 h-8.5z" fill="#fff" stroke="#999" stroke-width="0.9"/><path d="M1320 494.5 h6.5 l3.5 3.5 v7.4 h-10z" fill="#fff" stroke="#777" stroke-width="1"/>
<path d="M1316 495h4 M1316 497.5h4 M1322 500h6 M1322 502.5h6" stroke="#3d74b4" stroke-width="0.9"/>
<path d="M1314.1 513.5 l9.5 -1.2 v14.7 l-9.5 -1.2z" fill="#207245"/><rect x="1323.6" y="513.5" width="6.5" height="12.2" fill="#207245"/><rect x="1325.3" y="515.5" width="3" height="2" fill="#fff"/><rect x="1325.3" y="519" width="3" height="2" fill="#fff"/><rect x="1325.3" y="522.5" width="3" height="2" fill="#fff"/>
<text x="1318.7" y="523.3" font-size="9" font-weight="bold" fill="#fff" text-anchor="middle">X</text>
<path d="M1314.1 535 l9.5 -1.2 v14.7 l-9.5 -1.2z" fill="#d24726"/><rect x="1323.6" y="535" width="6.5" height="12.2" fill="#d24726"/><rect x="1325.3" y="537" width="3" height="8" fill="#f4b8a8"/>
<text x="1318.7" y="544.8" font-size="9" font-weight="bold" fill="#fff" text-anchor="middle">P</text>
<path d="M1314.5 557.3 h12.5 l2.8 2.8 v10.8 h-15.3z" fill="#4a9a78"/><rect x="1317" y="557.6" width="8" height="4" fill="#eef3fa"/><rect x="1317" y="564.5" width="10.5" height="5" fill="#eef3fa"/><path d="M1318 566 h8.5 M1318 568 h8.5" stroke="#4a9a78" stroke-width="0.6"/>
<rect x="1314.1" y="583.5" width="3.6" height="9.8" fill="#3d74b4"/><rect x="1319" y="577.8" width="3.6" height="15.5" fill="#3d74b4"/><rect x="1324" y="580.5" width="3.6" height="9" fill="#3d74b4"/>
<path d="M1320.5 593 l6.5 -6.5" stroke="#777" stroke-width="2.2"/><circle cx="1328" cy="585.8" r="2.6" fill="#777"/><circle cx="1329" cy="584.6" r="1.1" fill="#eef3fa"/>
<rect x="727.8" y="1015.3" width="226.9" height="24.1" rx="4" fill="#c9d5e2"/>
<text x="743.1" y="1031.8" font-size="11.5" fill="#000" stroke="#000" stroke-width="0.06" text-anchor="start" >Selected Years &amp; time slices (4/32)</text>
<path d="M942.9 1025.8 h7.2 l-3.6 3.8 z" fill="#000"/>
<rect x="961.1" y="1015.3" width="111.7" height="24.1" rx="4" fill="#c9d5e2"/>
<text x="971.3" y="1031.8" font-size="11.5" fill="#000" stroke="#000" stroke-width="0.06" text-anchor="start" >All Time slices</text>
<path d="M1061.2 1025.8 h7.2 l-3.6 3.8 z" fill="#000"/>
<rect x="1080.2" y="1021.2" width="12.8" height="12.8" rx="2" fill="#2f7bd8"/><path d="M1083 1027.6 l2.6 2.8 l4.6 -5.6" stroke="#fff" stroke-width="1.3" fill="none"/>
<text x="1096.9" y="1031.8" font-size="11.5" fill="#000" stroke="#000" stroke-width="0.06" text-anchor="start" >Years First</text>
</svg></body></html>
